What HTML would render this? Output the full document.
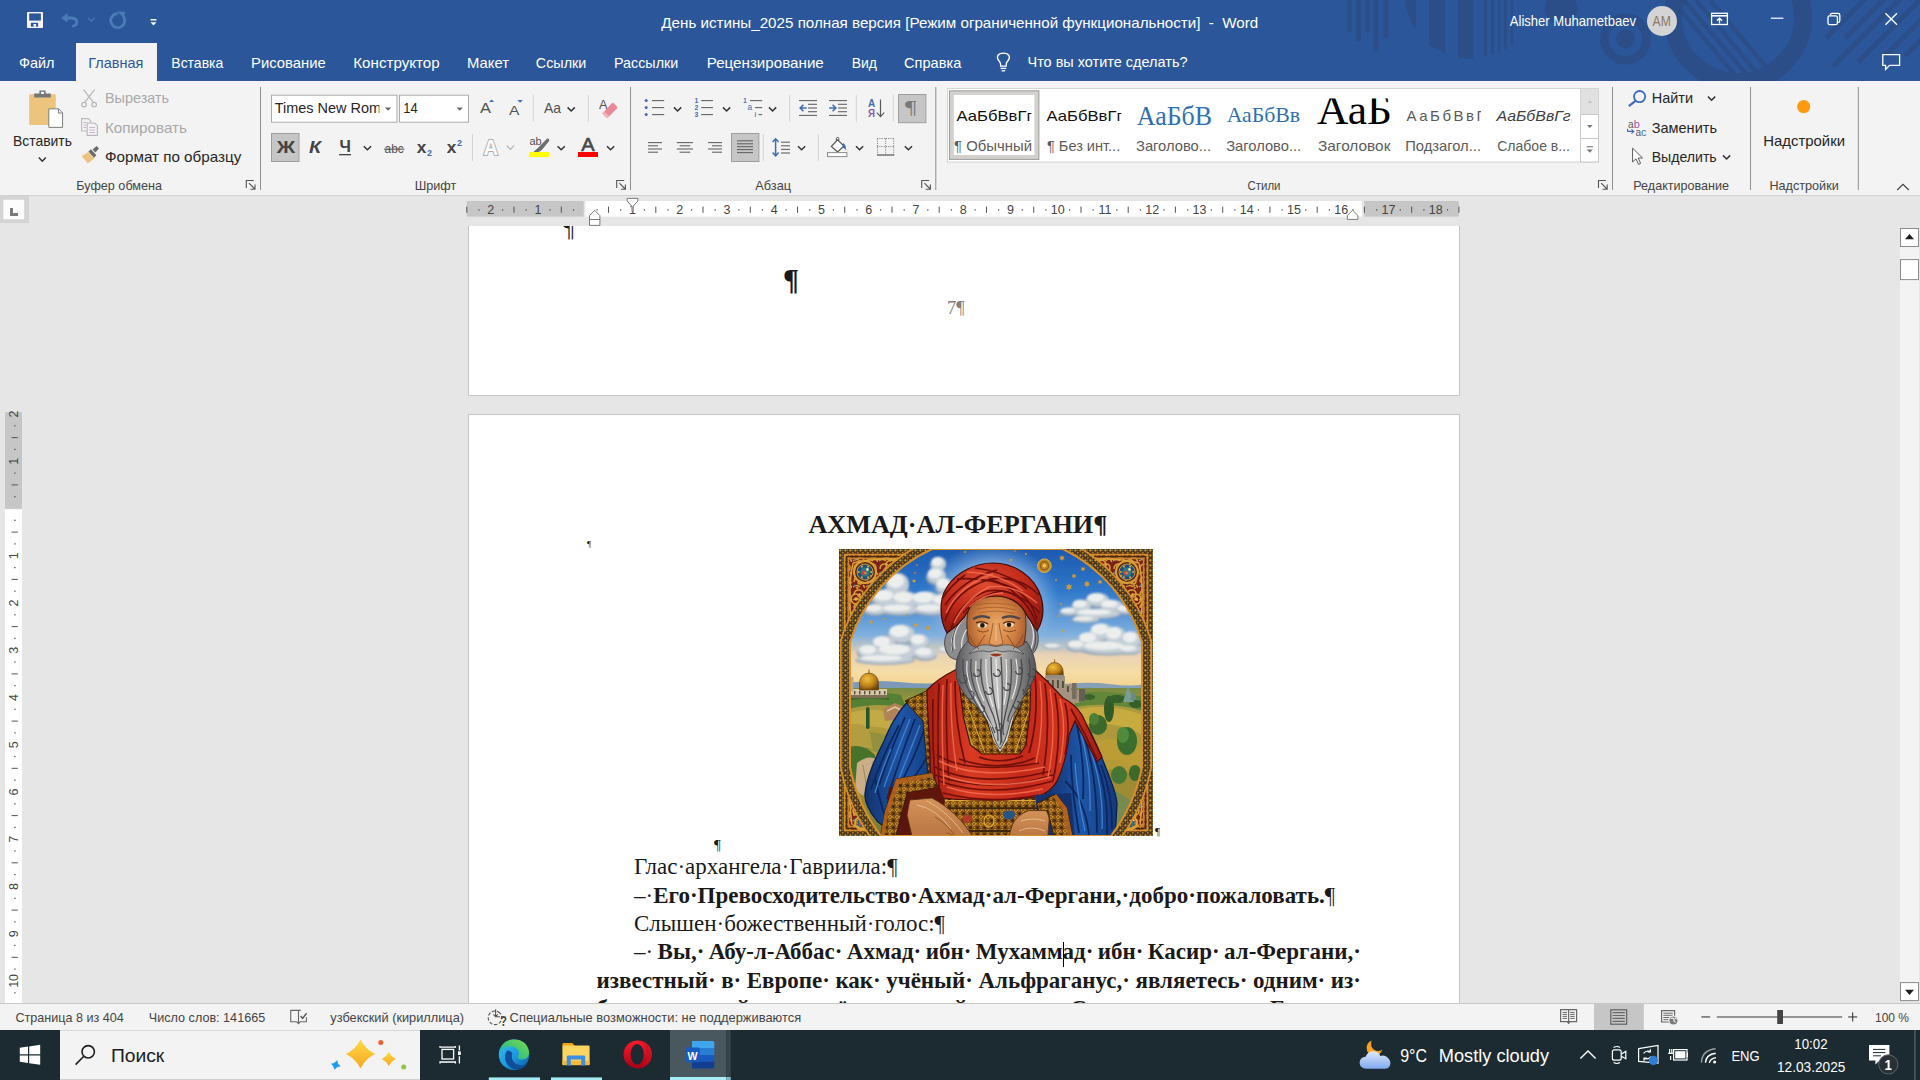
<!DOCTYPE html>
<html lang="ru">
<head>
<meta charset="utf-8">
<title>День истины_2025 полная версия - Word</title>
<style>
html,body{margin:0;padding:0;background:#e6e6e6;}
body{width:1920px;height:1080px;overflow:hidden;position:relative;font-family:"Liberation Sans",sans-serif;}
.abs{position:absolute;}
svg{position:absolute;left:0;overflow:hidden;}
svg text{font-family:"Liberation Sans",sans-serif;}
#titlebar{left:0;top:0;width:1920px;height:81px;background:#2b579a;}
#ribbon{left:0;top:81px;width:1920px;height:114px;background:#f3f3f3;border-bottom:1px solid #d2d2d2;}
#docarea{left:0;top:196px;width:1920px;height:807px;background:#e6e6e6;overflow:hidden;}
#statusbar{left:0;top:1003px;width:1920px;height:27px;background:#f3f3f3;border-top:1px solid #c8c8c8;box-sizing:border-box;}
#taskbar{left:0;top:1030px;width:1920px;height:50px;background:#1b2b31;}
.page{position:absolute;background:#fff;box-sizing:border-box;border:1px solid #c6c6c6;overflow:hidden;}
.doc{font-family:"Liberation Serif","Noto Serif CJK SC",serif;color:#1a1a1a;white-space:nowrap;}
.ln{position:absolute;font-size:23px;line-height:28px;height:28px;white-space:nowrap;}
.jl{display:flex;justify-content:space-between;}
b{font-weight:bold;}
</style>
</head>
<body>

<div id="titlebar" class="abs">
<svg width="1920" height="81" viewBox="0 0 1920 81" style="top:0">
<!-- decorative pattern -->
<g fill="#2b4e89">
<rect x="1347" y="0" width="4.7" height="31.7"/>
<rect x="1356" y="0" width="4.8" height="41"/>
<rect x="1365" y="0" width="4.7" height="31.7"/>
<rect x="1373.3" y="0" width="5" height="51.7"/>
<rect x="1383.3" y="0" width="5" height="37.5"/>
<path d="M1405 0 L1416 0 L1416 30 Q1407 18 1405 0Z"/>
<path d="M1429 0 H1445 V53.5 L1429 45Z"/>
<path d="M1458 0 H1473.3 V59 L1458 58Z"/>
<rect x="1484" y="0" width="3" height="56.7"/>
<rect x="1490.8" y="0" width="3" height="55"/>
<rect x="1498" y="0" width="2.2" height="52.5"/>
<rect x="1504" y="0" width="3" height="49"/>
<rect x="1510.8" y="0" width="2.4" height="45"/>
<circle cx="1561" cy="8.7" r="16.5"/>
</g>
<circle cx="1625.5" cy="39" r="21.2" fill="none" stroke="#2b4e89" stroke-width="8.6"/>
<circle cx="1625.5" cy="39" r="9.5" fill="#2b4e89"/>
<circle cx="1738" cy="17" r="65" fill="none" stroke="#2b4e89" stroke-width="18"/>
<clipPath id="cpBig"><circle cx="1738" cy="17" r="57"/></clipPath>
<g clip-path="url(#cpBig)" stroke="#2b4e89" stroke-width="4.5" fill="none">
<line x1="1672" y1="0" x2="1740" y2="81"/>
<line x1="1684" y1="0" x2="1752" y2="81"/>
<line x1="1696" y1="0" x2="1764" y2="81"/>
<line x1="1710" y1="0" x2="1778" y2="81"/>
</g>
<g stroke="#2b4e89" stroke-width="5" fill="none">
<line x1="1826" y1="38" x2="1866" y2="-2"/>
<line x1="1845" y1="38" x2="1885" y2="-2"/>
<line x1="1833" y1="66" x2="1901" y2="-2"/>
<line x1="1858" y1="62" x2="1922" y2="-2"/>
<line x1="1885" y1="56" x2="1922" y2="19"/>
<line x1="1905" y1="56" x2="1922" y2="39"/>
</g>
<!-- active tab -->
<rect x="76" y="43" width="81" height="38" fill="#f3f3f3"/>
<!-- save icon -->
<g>
<rect x="27" y="12" width="16" height="16" rx="0.8" fill="#f6f4f2"/>
<rect x="29.2" y="13.4" width="11.7" height="7.2" fill="#2b579a"/>
<rect x="30.9" y="22.8" width="7.2" height="3.9" fill="#2b579a"/>
<rect x="33.5" y="24" width="2.6" height="2.7" fill="#f6f4f2"/>
</g>
<!-- undo (disabled) -->
<g fill="#4a7cb8">
<path d="M61.4 17.9 L67.6 13 V16.5 H71.6 Q78.2 16.8 78.2 22.2 Q78 27 72.2 27.6 V25.2 Q75.4 24.6 75.4 22 Q75.2 19.4 71.6 19.4 H67.6 V22.6Z"/>
</g>
<path d="M87.8 17.6 L91.3 21.2 L94.8 17.6" stroke="#4a7cb8" stroke-width="1.2" fill="none"/>
<path d="M117.6 13.6 A7 7 0 1 0 123.2 16.2" stroke="#4a7cb8" stroke-width="2.7" fill="none"/>
<path d="M116.6 11.6 L124.8 11.8 L123.8 19.4 L121.6 15.4Z" fill="#4a7cb8"/>
<!-- customize QAT -->
<rect x="150.6" y="19" width="5.8" height="1.5" fill="#fff"/>
<path d="M150.5 22.2 H156.5 L153.5 25.6Z" fill="#fff"/>
<!-- title text -->
<g fill="#fff" font-size="15px">
<text x="661.3" y="27.5" textLength="597" lengthAdjust="spacingAndGlyphs" xml:space="preserve">День истины_2025 полная версия [Режим ограниченной функциональности]  -  Word</text>
<text x="1509.8" y="25.8" textLength="126.2" lengthAdjust="spacingAndGlyphs">Alisher Muhametbaev</text>
</g>
<circle cx="1662" cy="21" r="15" fill="#d4d4d4"/>
<text x="1652.6" y="26" font-size="14.5px" fill="#8d7566" textLength="18.2" lengthAdjust="spacingAndGlyphs">AM</text>
<!-- ribbon display options -->
<g stroke="#fff" fill="none" stroke-width="1.3">
<rect x="1711.6" y="13.3" width="15.8" height="11.2"/>
<line x1="1711" y1="15.8" x2="1728" y2="15.8" stroke-width="1.6"/>
<path d="M1719.5 23.5 V18.4 M1716.9 20.8 L1719.5 18.2 L1722.1 20.8"/>
</g>
<!-- minimize -->
<rect x="1770.8" y="17.6" width="12.6" height="1.2" fill="#fff"/>
<!-- restore -->
<g stroke="#fff" fill="none" stroke-width="1.3">
<rect x="1828" y="15.8" width="9.4" height="8.8" rx="1.6"/>
<path d="M1830.4 15.6 V15 Q1830.4 13.4 1832 13.4 H1838 Q1839.8 13.4 1839.8 15.2 V20.8 Q1839.8 22.4 1838.2 22.4 H1837.6"/>
</g>
<!-- close -->
<path d="M1885.4 13.2 L1897 24.8 M1897 13.2 L1885.4 24.8" stroke="#fff" stroke-width="1.3" fill="none"/>
<!-- comments -->
<path d="M1882.8 54.6 H1899.6 V65.4 H1889.6 L1885.6 69.4 V65.4 H1882.8Z" stroke="#fff" stroke-width="1.3" fill="none"/>
<!-- tabs -->
<g fill="#fff" font-size="15px">
<text x="19" y="67.5" textLength="35.5" lengthAdjust="spacingAndGlyphs">Файл</text>
<text x="88.3" y="67.5" textLength="55" lengthAdjust="spacingAndGlyphs" fill="#2b579a">Главная</text>
<text x="171.3" y="67.5" textLength="52" lengthAdjust="spacingAndGlyphs">Вставка</text>
<text x="251" y="67.5" textLength="74.8" lengthAdjust="spacingAndGlyphs">Рисование</text>
<text x="353.3" y="67.5" textLength="86.4" lengthAdjust="spacingAndGlyphs">Конструктор</text>
<text x="467" y="67.5" textLength="42" lengthAdjust="spacingAndGlyphs">Макет</text>
<text x="535.8" y="67.5" textLength="50.5" lengthAdjust="spacingAndGlyphs">Ссылки</text>
<text x="614" y="67.5" textLength="64.3" lengthAdjust="spacingAndGlyphs">Рассылки</text>
<text x="706.7" y="67.5" textLength="117.1" lengthAdjust="spacingAndGlyphs">Рецензирование</text>
<text x="851.7" y="67.5" textLength="25.3" lengthAdjust="spacingAndGlyphs">Вид</text>
<text x="904" y="67.5" textLength="57.3" lengthAdjust="spacingAndGlyphs">Справка</text>
<text x="1027.5" y="66.8" textLength="160" lengthAdjust="spacingAndGlyphs">Что вы хотите сделать?</text>
</g>
<!-- light bulb -->
<g stroke="#fff" fill="none" stroke-width="1.3">
<path d="M1000.6 66.2 V64.4 Q1000.6 62.6 999 61 Q996.6 58.6 997.8 55.6 Q999.2 53.2 1003.4 53.2 Q1007.6 53.2 1009 55.6 Q1010.2 58.6 1007.8 61 Q1006.2 62.6 1006.2 64.4 V66.2 Z"/>
<line x1="1000.6" y1="68.4" x2="1006.2" y2="68.4"/>
<line x1="1001.6" y1="70.8" x2="1005.2" y2="70.8"/>
</g>
</svg>
</div>

<div id="ribbon" class="abs"></div>
<svg width="1920" height="115" viewBox="0 81 1920 115" style="top:81px">
<rect x="260.0" y="87" width="1" height="103" fill="#8f8f8f"/>
<rect x="630.0" y="87" width="1" height="103" fill="#8f8f8f"/>
<rect x="935.3" y="87" width="1" height="103" fill="#8f8f8f"/>
<rect x="1612.0" y="87" width="1" height="103" fill="#8f8f8f"/>
<rect x="1750.0" y="87" width="1" height="103" fill="#8f8f8f"/>
<rect x="1857.8" y="87" width="1" height="103" fill="#8f8f8f"/>
<rect x="29.2" y="94.2" width="26.6" height="30.8" rx="1" fill="#ecc47e"/>
<path d="M34.2 97.6 V93.6 H39.4 V90.4 H45.6 V93.6 H50.8 V97.6Z" fill="#767676"/>
<rect x="41" y="91.8" width="3" height="2.2" fill="#f3f3f3"/>
<path d="M48.8 108.8 H58.6 L62.6 112.8 V127.4 H48.8Z" fill="#fff" stroke="#7d7d7d" stroke-width="1"/>
<path d="M58.4 108.8 V113 H62.6" fill="none" stroke="#7d7d7d" stroke-width="1"/>
<text x="13" y="146" font-size="15px" fill="#262626" textLength="59" lengthAdjust="spacingAndGlyphs">Вставить</text>
<path d="M38.8 157.6 L42.3 161.2 L45.8 157.6" stroke="#333" stroke-width="1.5" fill="none"/>
<g stroke="#b9b9b9" stroke-width="1.3" fill="none"><path d="M83.6 89.6 L93.4 102.4 M94.6 89.6 L84.8 102.4"/><circle cx="84" cy="104.6" r="2.3"/><circle cx="94.2" cy="104.6" r="2.3"/></g>
<text x="105" y="103" font-size="15px" fill="#a9a9a9" textLength="64" lengthAdjust="spacingAndGlyphs">Вырезать</text>
<g stroke="#b9b9b9" stroke-width="1.1" fill="#f3f3f3"><path d="M81.6 118.6 H88.2 L90.8 121.2 V131 H81.6Z"/><path d="M87.2 123 H94.6 L97.4 125.8 V135.4 H87.2Z"/></g>
<g stroke="#c9b7cf" stroke-width="1"><path d="M83.4 122.5h3 M83.4 125h3 M83.4 127.5h3 M89.2 127.5h6 M89.2 130h6 M89.2 132.5h6"/></g>
<text x="105" y="132.5" font-size="15px" fill="#a9a9a9" textLength="82" lengthAdjust="spacingAndGlyphs">Копировать</text>
<path d="M81.6 156.2 L88.2 152 L94.4 158.6 L87.6 163.4 Q86 160.6 81.6 156.2Z" fill="#edc382"/>
<path d="M88.4 151.6 L91 149.2 L96.4 155.2 L94 157.8Z" fill="#6a6a6a"/>
<path d="M92.6 149.4 L96.6 146 L99 148.6 L95.4 152.4Z" fill="#6a6a6a"/>
<text x="105" y="161.7" font-size="15px" fill="#262626" textLength="136.3" lengthAdjust="spacingAndGlyphs">Формат по образцу</text>
<text x="76.3" y="190" font-size="13px" fill="#444" textLength="85.7" lengthAdjust="spacingAndGlyphs">Буфер обмена</text>
<g stroke="#555" stroke-width="1.1" fill="none"><path d="M246.3 188 V180.5 H253.8"/><path d="M249.0 183.2 L254.8 189 M255.0 184.6 V189.2 H250.4"/></g>
<rect x="271.5" y="95.2" width="125.5" height="27" fill="#fff" stroke="#ababab" stroke-width="1"/>
<clipPath id="cpFn"><rect x="272" y="96" width="107.4" height="26"/></clipPath>
<g clip-path="url(#cpFn)"><text x="274.7" y="113.3" font-size="15px" fill="#262626" textLength="122.5" lengthAdjust="spacingAndGlyphs">Times New Roman</text></g>
<path d="M385 107.6 H391.2 L388.1 110.8Z" fill="#666"/>
<rect x="399.5" y="95.2" width="69" height="27" fill="#fff" stroke="#ababab" stroke-width="1"/>
<text x="403.2" y="113.3" font-size="15px" fill="#262626" textLength="14.4" lengthAdjust="spacingAndGlyphs">14</text>
<path d="M456.6 107.6 H462.8 L459.7 110.8Z" fill="#666"/>
<text x="480" y="113.4" font-size="14.5px" fill="#505050" textLength="11" lengthAdjust="spacingAndGlyphs">A</text>
<path d="M489 102 L491.6 99.4 L494.2 102Z" fill="#3e6db5"/>
<text x="509" y="114.6" font-size="13px" fill="#505050" textLength="10.4" lengthAdjust="spacingAndGlyphs">A</text>
<path d="M517.4 100 H522.8 L520.1 102.8Z" fill="#3e6db5"/>
<rect x="532.8" y="95" width="1" height="27" fill="#d4d4d4"/>
<text x="544" y="112.8" font-size="14.5px" fill="#505050" textLength="17" lengthAdjust="spacingAndGlyphs">Aa</text>
<path d="M567.6 107.4 L571.2 111 L574.8 107.4" stroke="#333" stroke-width="1.5" fill="none"/>
<rect x="587.8" y="95" width="1" height="27" fill="#d4d4d4"/>
<text x="599" y="109" font-size="12.5px" fill="#505050" textLength="8.5" lengthAdjust="spacingAndGlyphs">A</text>
<path d="M602.4 113.6 L611.8 103.2 Q612.8 102.4 613.8 103.2 L617 106.4 Q617.8 107.4 617 108.4 L608 117.6 Q607 118.2 606.2 117.4Z" fill="#e8899a"/>
<path d="M602.4 113.6 L606.2 117.4 Q607 118.2 608 117.6 L609.4 116.2 L604 111.8Z" fill="#f3b4bf"/>
<rect x="271.5" y="133.5" width="27.5" height="28" fill="#c6c6c6" stroke="#9e9e9e" stroke-width="1"/>
<text x="276.7" y="153" font-size="16px" fill="#444" textLength="18.3" lengthAdjust="spacingAndGlyphs" font-weight="bold">Ж</text>
<text x="309" y="153" font-size="16px" fill="#444" textLength="12" lengthAdjust="spacingAndGlyphs" font-weight="bold" font-style="italic">К</text>
<text x="339.4" y="152" font-size="16px" fill="#444" textLength="11.4" lengthAdjust="spacingAndGlyphs" font-weight="bold">Ч</text>
<rect x="339" y="154" width="12" height="1.3" fill="#444"/>
<path d="M363.8 146.2 L367.4 149.8 L371 146.2" stroke="#333" stroke-width="1.5" fill="none"/>
<text x="384.6" y="153" font-size="13px" fill="#555" textLength="19" lengthAdjust="spacingAndGlyphs">abc</text>
<rect x="384" y="148.6" width="20.4" height="1.1" fill="#555"/>
<text x="416.7" y="153" font-size="17px" fill="#444" textLength="9.6" lengthAdjust="spacingAndGlyphs" font-weight="bold">x</text>
<text x="427" y="156.4" font-size="9.5px" fill="#3e6db5" textLength="5" lengthAdjust="spacingAndGlyphs" font-weight="bold">2</text>
<text x="446.7" y="153" font-size="17px" fill="#444" textLength="9.6" lengthAdjust="spacingAndGlyphs" font-weight="bold">x</text>
<text x="457" y="145.6" font-size="9.5px" fill="#3e6db5" textLength="5" lengthAdjust="spacingAndGlyphs" font-weight="bold">2</text>
<rect x="472.0" y="134" width="1" height="27" fill="#d4d4d4"/>
<text x="483.6" y="154.6" font-size="22px" font-weight="bold" textLength="14.6" lengthAdjust="spacingAndGlyphs" fill="#fdfdfd" stroke="#aeaeae" stroke-width="2" paint-order="stroke">A</text>
<path d="M506.8 145.6 L510.4 149.4 L514 145.6" stroke="#b4b4b4" stroke-width="1.2" fill="none"/>
<text x="529.4" y="145.2" font-size="11.5px" fill="#505050" textLength="12.2" lengthAdjust="spacingAndGlyphs">ab</text>
<path d="M546.4 139.2 Q547.8 138 549 139.2 Q549.8 140.4 548.8 141.6 L541.6 150.2 L538.6 152 H533.4 L538.4 147.6Z" fill="#6e6e6e"/>
<rect x="529" y="152" width="20" height="5" fill="#ffff00"/>
<path d="M557.6 146.2 L561.2 149.8 L564.8 146.2" stroke="#333" stroke-width="1.5" fill="none"/>
<text x="581.2" y="150.8" font-size="17.8px" fill="#484848" textLength="13.4" lengthAdjust="spacingAndGlyphs" stroke="#484848" stroke-width="0.6">A</text>
<rect x="578" y="152" width="20" height="5" fill="#ff0000"/>
<path d="M607 146.2 L610.6 149.8 L614.2 146.2" stroke="#333" stroke-width="1.5" fill="none"/>
<text x="414.7" y="190" font-size="13px" fill="#444" textLength="41.6" lengthAdjust="spacingAndGlyphs">Шрифт</text>
<g stroke="#555" stroke-width="1.1" fill="none"><path d="M616.7 188 V180.5 H624.2"/><path d="M619.4000000000001 183.2 L625.2 189 M625.4000000000001 184.6 V189.2 H620.8000000000001"/></g>
<circle cx="646.2" cy="100.6" r="1.5" fill="#3e6db5"/>
<rect x="652" y="100.05" width="12.200000000000045" height="1.1" fill="#646464"/>
<circle cx="646.2" cy="107.6" r="1.5" fill="#3e6db5"/>
<rect x="652" y="107.05" width="12.200000000000045" height="1.1" fill="#646464"/>
<circle cx="646.2" cy="114.6" r="1.5" fill="#3e6db5"/>
<rect x="652" y="114.05" width="12.200000000000045" height="1.1" fill="#646464"/>
<path d="M674 107.4 L677.6 111 L681.2 107.4" stroke="#333" stroke-width="1.5" fill="none"/>
<text x="694.4" y="103.0" font-size="7px" fill="#3e6db5" textLength="3.8" lengthAdjust="spacingAndGlyphs" font-weight="bold">1</text>
<rect x="701.2" y="100.05" width="11.799999999999955" height="1.1" fill="#646464"/>
<text x="694.4" y="110.0" font-size="7px" fill="#3e6db5" textLength="3.8" lengthAdjust="spacingAndGlyphs" font-weight="bold">2</text>
<rect x="701.2" y="107.05" width="11.799999999999955" height="1.1" fill="#646464"/>
<text x="694.4" y="117.0" font-size="7px" fill="#3e6db5" textLength="3.8" lengthAdjust="spacingAndGlyphs" font-weight="bold">3</text>
<rect x="701.2" y="114.05" width="11.799999999999955" height="1.1" fill="#646464"/>
<path d="M723 107.4 L726.6 111 L730.2 107.4" stroke="#333" stroke-width="1.5" fill="none"/>
<text x="743.2" y="103" font-size="7px" fill="#3e6db5" textLength="3.4" lengthAdjust="spacingAndGlyphs" font-weight="bold">1</text>
<rect x="750" y="100.05" width="12.200000000000045" height="1.1" fill="#646464"/>
<text x="747.6" y="110.4" font-size="8.5px" fill="#3e6db5" textLength="4.6" lengthAdjust="spacingAndGlyphs">a</text>
<rect x="755" y="107.05" width="7.2000000000000455" height="1.1" fill="#646464"/>
<text x="754.6" y="117.2" font-size="7.5px" fill="#3e6db5" textLength="1.6" lengthAdjust="spacingAndGlyphs" font-weight="bold">i</text>
<rect x="758.6" y="114.05" width="3.6000000000000227" height="1.1" fill="#646464"/>
<path d="M769 107.4 L772.6 111 L776.2 107.4" stroke="#333" stroke-width="1.5" fill="none"/>
<rect x="789.2" y="95" width="1" height="27" fill="#d4d4d4"/>
<rect x="799" y="100.05" width="18" height="1.1" fill="#646464"/>
<rect x="799" y="114.85000000000001" width="18" height="1.1" fill="#646464"/>
<rect x="808" y="103.75" width="9" height="1.1" fill="#646464"/>
<rect x="808" y="107.45" width="9" height="1.1" fill="#646464"/>
<rect x="808" y="111.15" width="9" height="1.1" fill="#646464"/>
<rect x="829" y="100.05" width="18" height="1.1" fill="#646464"/>
<rect x="829" y="114.85000000000001" width="18" height="1.1" fill="#646464"/>
<rect x="838" y="103.75" width="9" height="1.1" fill="#646464"/>
<rect x="838" y="107.45" width="9" height="1.1" fill="#646464"/>
<rect x="838" y="111.15" width="9" height="1.1" fill="#646464"/>
<path d="M806.6 108 H800.4 M803.4 104.8 L800.2 108 L803.4 111.2" stroke="#3e6db5" stroke-width="1.6" fill="none"/>
<path d="M829.2 108 H835.6 M832.6 104.8 L835.8 108 L832.6 111.2" stroke="#3e6db5" stroke-width="1.6" fill="none"/>
<rect x="855.8" y="95" width="1" height="27" fill="#d4d4d4"/>
<text x="868" y="107.2" font-size="11px" fill="#3e6db5" textLength="7.2" lengthAdjust="spacingAndGlyphs" font-weight="bold">А</text>
<text x="868" y="117.2" font-size="11px" fill="#8e5aa8" textLength="7" lengthAdjust="spacingAndGlyphs" font-weight="bold">Я</text>
<path d="M880.5 99.6 V116.4 M876.8 112.6 L880.5 116.6 L884.2 112.6" stroke="#5a5a5a" stroke-width="1.2" fill="none"/>
<rect x="892.8" y="95" width="1" height="27" fill="#d4d4d4"/>
<rect x="898.5" y="94.5" width="27.4" height="28.2" fill="#c6c6c6" stroke="#9e9e9e" stroke-width="1"/>
<text x="905" y="114.4" font-size="19px" fill="#787878" textLength="11.6" lengthAdjust="spacingAndGlyphs" style="font-family:'Liberation Serif',serif">¶</text>
<rect x="648" y="142.04999999999998" width="14" height="1.1" fill="#646464"/>
<rect x="676.8" y="142.04999999999998" width="16.200000000000045" height="1.1" fill="#646464"/>
<rect x="708" y="142.04999999999998" width="14" height="1.1" fill="#646464"/>
<rect x="648" y="145.25" width="10" height="1.1" fill="#646464"/>
<rect x="679.6" y="145.25" width="10.600000000000023" height="1.1" fill="#646464"/>
<rect x="712" y="145.25" width="10" height="1.1" fill="#646464"/>
<rect x="648" y="148.45" width="14" height="1.1" fill="#646464"/>
<rect x="676.8" y="148.45" width="16.200000000000045" height="1.1" fill="#646464"/>
<rect x="708" y="148.45" width="14" height="1.1" fill="#646464"/>
<rect x="648" y="151.64999999999998" width="10" height="1.1" fill="#646464"/>
<rect x="679.6" y="151.64999999999998" width="10.600000000000023" height="1.1" fill="#646464"/>
<rect x="712" y="151.64999999999998" width="10" height="1.1" fill="#646464"/>
<rect x="731.5" y="133.5" width="27.4" height="28" fill="#c6c6c6" stroke="#9e9e9e" stroke-width="1"/>
<rect x="737" y="140.25" width="16" height="1.1" fill="#646464"/>
<rect x="737" y="143.25" width="16" height="1.1" fill="#646464"/>
<rect x="737" y="146.14999999999998" width="16" height="1.1" fill="#646464"/>
<rect x="737" y="149.04999999999998" width="16" height="1.1" fill="#646464"/>
<rect x="737" y="152.04999999999998" width="16" height="1.1" fill="#646464"/>
<rect x="762.8" y="134" width="1" height="27" fill="#d4d4d4"/>
<path d="M775.6 139 V155.6 M772.6 142 L775.6 138.8 L778.6 142 M772.6 152.6 L775.6 155.8 L778.6 152.6" stroke="#3e6db5" stroke-width="1.5" fill="none"/>
<rect x="781" y="141.64999999999998" width="9" height="1.1" fill="#646464"/>
<rect x="781" y="145.25" width="9" height="1.1" fill="#646464"/>
<rect x="781" y="148.85" width="9" height="1.1" fill="#646464"/>
<rect x="781" y="152.45" width="9" height="1.1" fill="#646464"/>
<path d="M798 146.2 L801.6 149.8 L805.2 146.2" stroke="#333" stroke-width="1.5" fill="none"/>
<rect x="817.8" y="134" width="1" height="27" fill="#d4d4d4"/>
<path d="M831.4 146.4 L837.6 139.8 L844 146 L837.6 152 Z" fill="#fdfdfd" stroke="#555" stroke-width="1.2"/>
<path d="M836.4 141 V138.4 Q836.4 137.4 837.6 137.4 Q838.8 137.4 838.8 138.4 V140.6" fill="none" stroke="#555" stroke-width="1"/>
<path d="M843 143 Q846.4 144.8 845.8 150 Q844.2 148 842.4 147.6Z" fill="#3e6db5"/>
<rect x="827.5" y="152.6" width="19.4" height="4" fill="#fff" stroke="#8a8a8a" stroke-width="1"/>
<path d="M856 146.2 L859.6 149.8 L863.2 146.2" stroke="#333" stroke-width="1.5" fill="none"/>
<g stroke="#7a7a7a" stroke-width="1" stroke-dasharray="1 1.2" fill="none"><path d="M877.2 138.5 H894 M877.5 138.5 V154.6 M893.7 138.5 V154.6 M885.6 138.5 V154.6 M877.2 146.6 H894"/></g>
<rect x="877" y="154.4" width="17.200000000000045" height="1.2" fill="#555"/>
<path d="M904.8 146.2 L908.4 149.8 L912 146.2" stroke="#333" stroke-width="1.5" fill="none"/>
<text x="755.3" y="190" font-size="13px" fill="#444" textLength="35.7" lengthAdjust="spacingAndGlyphs">Абзац</text>
<g stroke="#555" stroke-width="1.1" fill="none"><path d="M921.7 188 V180.5 H929.2"/><path d="M924.4000000000001 183.2 L930.2 189 M930.4000000000001 184.6 V189.2 H925.8000000000001"/></g>
<rect x="947.5" y="88.5" width="651" height="73.5" fill="#fff" stroke="#d4d4d4" stroke-width="1"/>
<rect x="949.5" y="90.8" width="89.4" height="68.6" fill="#d2d1ce" stroke="#9c9c9c" stroke-width="1"/>
<rect x="953.8" y="95" width="80.6" height="60" fill="#fff"/>
<clipPath id="cpS1"><rect x="954" y="95" width="77.4" height="60"/></clipPath>
<g clip-path="url(#cpS1)"><text x="956.6" y="120.5" font-size="15px" fill="#111" textLength="78.5" lengthAdjust="spacingAndGlyphs">АаБбВвГг,</text></g>
<text x="954" y="150.8" font-size="14.5px" fill="#5c5c5c" textLength="78" lengthAdjust="spacingAndGlyphs">¶ Обычный</text>
<clipPath id="cpS2"><rect x="1044" y="95" width="77.4" height="60"/></clipPath>
<g clip-path="url(#cpS2)"><text x="1046.6" y="120.5" font-size="15px" fill="#111" textLength="78.5" lengthAdjust="spacingAndGlyphs">АаБбВвГг,</text></g>
<text x="1047" y="150.8" font-size="14.5px" fill="#5c5c5c" textLength="73.2" lengthAdjust="spacingAndGlyphs">¶ Без инт...</text>
<text x="1136.8" y="124.6" font-size="26.5px" fill="#2f6fb4" textLength="75.2" lengthAdjust="spacingAndGlyphs" style="font-family:'Liberation Serif',serif">АаБбВ</text>
<text x="1136" y="150.8" font-size="14.5px" fill="#5c5c5c" textLength="75" lengthAdjust="spacingAndGlyphs">Заголово...</text>
<text x="1226.7" y="122.4" font-size="21.5px" fill="#2f6fb4" textLength="73.4" lengthAdjust="spacingAndGlyphs" style="font-family:'Liberation Serif',serif">АаБбВв</text>
<text x="1226.2" y="150.8" font-size="14.5px" fill="#5c5c5c" textLength="75" lengthAdjust="spacingAndGlyphs">Заголово...</text>
<clipPath id="cpS5"><rect x="1314" y="98.6" width="78.2" height="40"/></clipPath>
<g clip-path="url(#cpS5)"><text x="1317" y="123.7" font-size="42px" fill="#000" textLength="75" lengthAdjust="spacingAndGlyphs" style="font-family:'Liberation Serif',serif">АаБ</text></g>
<text x="1318" y="150.8" font-size="14.5px" fill="#5c5c5c" textLength="72.4" lengthAdjust="spacingAndGlyphs">Заголовок</text>
<clipPath id="cpS6"><rect x="1404" y="95" width="77" height="40"/></clipPath>
<g clip-path="url(#cpS6)"><text x="1406.6" y="120.5" font-size="15px" fill="#5a5a5a" textLength="86" lengthAdjust="spacing">АаБбВвГг</text></g>
<text x="1405.2" y="150.8" font-size="14.5px" fill="#5c5c5c" textLength="75.8" lengthAdjust="spacingAndGlyphs">Подзагол...</text>
<clipPath id="cpS7"><rect x="1494" y="95" width="77.4" height="40"/></clipPath>
<g clip-path="url(#cpS7)"><text x="1496.6" y="120.5" font-size="15px" fill="#404040" textLength="78.5" lengthAdjust="spacingAndGlyphs" font-style="italic">АаБбВвГг,</text></g>
<text x="1497.2" y="150.8" font-size="14.5px" fill="#5c5c5c" textLength="72.8" lengthAdjust="spacingAndGlyphs">Слабое в...</text>
<rect x="1580.5" y="88.5" width="18" height="26" fill="#e1e1e1" stroke="#d4d4d4" stroke-width="1"/>
<path d="M1587.4 103 L1589.8 100.4 L1592.2 103Z" fill="#c4c4c4"/>
<rect x="1580.5" y="114.5" width="18" height="24" fill="#fff" stroke="#c8c8c8" stroke-width="1"/>
<path d="M1587 125 H1592.6 L1589.8 128Z" fill="#777"/>
<rect x="1580.5" y="138.5" width="18" height="23.5" fill="#fff" stroke="#c8c8c8" stroke-width="1"/>
<rect x="1586.6" y="146.2" width="6.4" height="1.1" fill="#777"/><path d="M1586.8 149.4 H1592.8 L1589.8 152.8Z" fill="#777"/>
<text x="1247.5" y="190" font-size="13px" fill="#444" textLength="33" lengthAdjust="spacingAndGlyphs">Стили</text>
<g stroke="#555" stroke-width="1.1" fill="none"><path d="M1598.5 188 V180.5 H1606"/><path d="M1601.2 183.2 L1607 189 M1607.2 184.6 V189.2 H1602.6"/></g>
<circle cx="1639.6" cy="96.6" r="5.6" fill="none" stroke="#3e6db5" stroke-width="1.8"/>
<path d="M1635.6 100.8 L1628.8 106.2" stroke="#3e6db5" stroke-width="2.2" fill="none"/>
<text x="1651.7" y="103" font-size="15px" fill="#262626" textLength="41.3" lengthAdjust="spacingAndGlyphs">Найти</text>
<path d="M1708 96.6 L1711.6 100.2 L1715.2 96.6" stroke="#333" stroke-width="1.5" fill="none"/>
<text x="1628" y="128" font-size="10.5px" fill="#5a5a5a" textLength="5.6" lengthAdjust="spacingAndGlyphs">a</text><text x="1633.8" y="128" font-size="10.5px" fill="#8e5aa8" textLength="6" lengthAdjust="spacingAndGlyphs">b</text>
<text x="1635.4" y="136.4" font-size="10.5px" fill="#5a5a5a" textLength="5.6" lengthAdjust="spacingAndGlyphs">a</text><text x="1641" y="136.4" font-size="10.5px" fill="#3e6db5" textLength="5.4" lengthAdjust="spacingAndGlyphs">c</text>
<path d="M1627.6 128.8 V131.4 H1633.6 M1631.4 129.4 L1633.8 131.4 L1631.4 133.6" stroke="#3e6db5" stroke-width="1.1" fill="none"/>
<text x="1651.7" y="132.5" font-size="15px" fill="#262626" textLength="65.3" lengthAdjust="spacingAndGlyphs">Заменить</text>
<path d="M1632.6 148.2 V162 L1636 158.8 L1638.6 164.4 L1640.6 163.4 L1638.2 158 H1642.6Z" fill="#fff" stroke="#5a5a5a" stroke-width="1"/>
<text x="1651.7" y="161.7" font-size="15px" fill="#262626" textLength="65" lengthAdjust="spacingAndGlyphs">Выделить</text>
<path d="M1723 155.4 L1726.6 159 L1730.2 155.4" stroke="#333" stroke-width="1.5" fill="none"/>
<text x="1633.3" y="190" font-size="13px" fill="#444" textLength="95.7" lengthAdjust="spacingAndGlyphs">Редактирование</text>
<circle cx="1803.7" cy="106.7" r="6.6" fill="#ff9a0e"/>
<text x="1763.3" y="146" font-size="15px" fill="#262626" textLength="81.7" lengthAdjust="spacingAndGlyphs">Надстройки</text>
<text x="1769.5" y="190" font-size="13px" fill="#444" textLength="69.2" lengthAdjust="spacingAndGlyphs">Надстройки</text>
<path d="M1897.2 190 L1903 184.4 L1908.8 190" stroke="#444" stroke-width="1.2" fill="none"/>
</svg>
<svg width="1920" height="807" viewBox="0 196 1920 807" style="top:196px">
<rect x="0" y="196" width="29" height="27" fill="#d4d4d4"/>
<rect x="3.4" y="199.8" width="20.8" height="19.4" fill="#fcfcfc"/>
<path d="M10 208 H13 V213 H18 V215.9 H10Z" fill="#7a7a7a"/>
<rect x="466.7" y="201" width="117" height="15.6" fill="#c6c6c6"/>
<rect x="585.6" y="201" width="776.4" height="15.6" fill="#fff"/>
<rect x="1364.2" y="201" width="94.6" height="15.6" fill="#c6c6c6"/>
<rect x="466.3" y="206.6" width="1" height="6.2" fill="#555"/>
<rect x="478.4" y="209.2" width="1.2" height="1.4" fill="#555"/>
<text x="490.8" y="213.8" font-size="12.5px" fill="#444" text-anchor="middle">2</text>
<rect x="502.0" y="209.2" width="1.2" height="1.4" fill="#555"/>
<rect x="513.5" y="206.6" width="1" height="6.2" fill="#555"/>
<rect x="525.6" y="209.2" width="1.2" height="1.4" fill="#555"/>
<text x="538.1" y="213.8" font-size="12.5px" fill="#444" text-anchor="middle">1</text>
<rect x="549.3" y="209.2" width="1.2" height="1.4" fill="#555"/>
<rect x="560.8" y="206.6" width="1" height="6.2" fill="#555"/>
<rect x="572.9" y="209.2" width="1.2" height="1.4" fill="#555"/>
<rect x="596.5" y="209.2" width="1.2" height="1.4" fill="#555"/>
<rect x="608.0" y="206.6" width="1" height="6.2" fill="#555"/>
<rect x="620.1" y="209.2" width="1.2" height="1.4" fill="#555"/>
<text x="632.5" y="213.8" font-size="12.5px" fill="#444" text-anchor="middle">1</text>
<rect x="643.8" y="209.2" width="1.2" height="1.4" fill="#555"/>
<rect x="655.3" y="206.6" width="1" height="6.2" fill="#555"/>
<rect x="667.4" y="209.2" width="1.2" height="1.4" fill="#555"/>
<text x="679.8" y="213.8" font-size="12.5px" fill="#444" text-anchor="middle">2</text>
<rect x="691.0" y="209.2" width="1.2" height="1.4" fill="#555"/>
<rect x="702.5" y="206.6" width="1" height="6.2" fill="#555"/>
<rect x="714.6" y="209.2" width="1.2" height="1.4" fill="#555"/>
<text x="727.0" y="213.8" font-size="12.5px" fill="#444" text-anchor="middle">3</text>
<rect x="738.2" y="209.2" width="1.2" height="1.4" fill="#555"/>
<rect x="749.8" y="206.6" width="1" height="6.2" fill="#555"/>
<rect x="761.9" y="209.2" width="1.2" height="1.4" fill="#555"/>
<text x="774.3" y="213.8" font-size="12.5px" fill="#444" text-anchor="middle">4</text>
<rect x="785.5" y="209.2" width="1.2" height="1.4" fill="#555"/>
<rect x="797.0" y="206.6" width="1" height="6.2" fill="#555"/>
<rect x="809.1" y="209.2" width="1.2" height="1.4" fill="#555"/>
<text x="821.5" y="213.8" font-size="12.5px" fill="#444" text-anchor="middle">5</text>
<rect x="832.7" y="209.2" width="1.2" height="1.4" fill="#555"/>
<rect x="844.2" y="206.6" width="1" height="6.2" fill="#555"/>
<rect x="856.4" y="209.2" width="1.2" height="1.4" fill="#555"/>
<text x="868.8" y="213.8" font-size="12.5px" fill="#444" text-anchor="middle">6</text>
<rect x="880.0" y="209.2" width="1.2" height="1.4" fill="#555"/>
<rect x="891.5" y="206.6" width="1" height="6.2" fill="#555"/>
<rect x="903.6" y="209.2" width="1.2" height="1.4" fill="#555"/>
<text x="916.0" y="213.8" font-size="12.5px" fill="#444" text-anchor="middle">7</text>
<rect x="927.2" y="209.2" width="1.2" height="1.4" fill="#555"/>
<rect x="938.7" y="206.6" width="1" height="6.2" fill="#555"/>
<rect x="950.8" y="209.2" width="1.2" height="1.4" fill="#555"/>
<text x="963.3" y="213.8" font-size="12.5px" fill="#444" text-anchor="middle">8</text>
<rect x="974.5" y="209.2" width="1.2" height="1.4" fill="#555"/>
<rect x="986.0" y="206.6" width="1" height="6.2" fill="#555"/>
<rect x="998.1" y="209.2" width="1.2" height="1.4" fill="#555"/>
<text x="1010.5" y="213.8" font-size="12.5px" fill="#444" text-anchor="middle">9</text>
<rect x="1021.7" y="209.2" width="1.2" height="1.4" fill="#555"/>
<rect x="1033.2" y="206.6" width="1" height="6.2" fill="#555"/>
<rect x="1045.3" y="209.2" width="1.2" height="1.4" fill="#555"/>
<text x="1057.7" y="213.8" font-size="12.5px" fill="#444" text-anchor="middle">10</text>
<rect x="1069.0" y="209.2" width="1.2" height="1.4" fill="#555"/>
<rect x="1080.5" y="206.6" width="1" height="6.2" fill="#555"/>
<rect x="1092.6" y="209.2" width="1.2" height="1.4" fill="#555"/>
<text x="1105.0" y="213.8" font-size="12.5px" fill="#444" text-anchor="middle">11</text>
<rect x="1116.2" y="209.2" width="1.2" height="1.4" fill="#555"/>
<rect x="1127.7" y="206.6" width="1" height="6.2" fill="#555"/>
<rect x="1139.8" y="209.2" width="1.2" height="1.4" fill="#555"/>
<text x="1152.2" y="213.8" font-size="12.5px" fill="#444" text-anchor="middle">12</text>
<rect x="1163.4" y="209.2" width="1.2" height="1.4" fill="#555"/>
<rect x="1174.9" y="206.6" width="1" height="6.2" fill="#555"/>
<rect x="1187.1" y="209.2" width="1.2" height="1.4" fill="#555"/>
<text x="1199.5" y="213.8" font-size="12.5px" fill="#444" text-anchor="middle">13</text>
<rect x="1210.7" y="209.2" width="1.2" height="1.4" fill="#555"/>
<rect x="1222.2" y="206.6" width="1" height="6.2" fill="#555"/>
<rect x="1234.3" y="209.2" width="1.2" height="1.4" fill="#555"/>
<text x="1246.7" y="213.8" font-size="12.5px" fill="#444" text-anchor="middle">14</text>
<rect x="1257.9" y="209.2" width="1.2" height="1.4" fill="#555"/>
<rect x="1269.4" y="206.6" width="1" height="6.2" fill="#555"/>
<rect x="1281.5" y="209.2" width="1.2" height="1.4" fill="#555"/>
<text x="1294.0" y="213.8" font-size="12.5px" fill="#444" text-anchor="middle">15</text>
<rect x="1305.2" y="209.2" width="1.2" height="1.4" fill="#555"/>
<rect x="1316.7" y="206.6" width="1" height="6.2" fill="#555"/>
<rect x="1328.8" y="209.2" width="1.2" height="1.4" fill="#555"/>
<text x="1341.2" y="213.8" font-size="12.5px" fill="#444" text-anchor="middle">16</text>
<rect x="1352.4" y="209.2" width="1.2" height="1.4" fill="#555"/>
<rect x="1363.9" y="206.6" width="1" height="6.2" fill="#555"/>
<rect x="1376.0" y="209.2" width="1.2" height="1.4" fill="#555"/>
<text x="1388.4" y="213.8" font-size="12.5px" fill="#444" text-anchor="middle">17</text>
<rect x="1399.7" y="209.2" width="1.2" height="1.4" fill="#555"/>
<rect x="1411.2" y="206.6" width="1" height="6.2" fill="#555"/>
<rect x="1423.3" y="209.2" width="1.2" height="1.4" fill="#555"/>
<text x="1435.7" y="213.8" font-size="12.5px" fill="#444" text-anchor="middle">18</text>
<rect x="1446.9" y="209.2" width="1.2" height="1.4" fill="#555"/>
<rect x="1458.4" y="206.6" width="1" height="6.2" fill="#555"/>
<path d="M627.2 198.4 H637.8 V201 L633 206.4 V211.6 H632 V206.4 L627.2 201Z" fill="#fff" stroke="#7a7a7a" stroke-width="1"/>
<path d="M589.5 215.6 L594.7 210.4 L599.9 215.6 V225.4 H589.5Z" fill="#fff" stroke="#7a7a7a" stroke-width="1"/>
<path d="M589.5 219.5 H599.9" stroke="#7a7a7a" stroke-width="1"/>
<path d="M1347.3 219.4 V215.4 L1352.6 210.2 L1357.9 215.4 V219.4Z" fill="#fff" stroke="#7a7a7a" stroke-width="1"/>
<rect x="5" y="412.2" width="17" height="96.6" fill="#c6c6c6"/>
<rect x="5" y="509.4" width="17" height="493.6" fill="#fff"/>
<text transform="translate(18.2 414.0) rotate(-90)" font-size="12.5px" fill="#444" text-anchor="middle">2</text>
<rect x="14.2" y="425.2" width="1.4" height="1.2" fill="#555"/>
<rect x="11.6" y="437.1" width="6.2" height="1" fill="#555"/>
<rect x="14.2" y="448.8" width="1.4" height="1.2" fill="#555"/>
<text transform="translate(18.2 461.3) rotate(-90)" font-size="12.5px" fill="#444" text-anchor="middle">1</text>
<rect x="14.2" y="472.5" width="1.4" height="1.2" fill="#555"/>
<rect x="11.6" y="484.4" width="6.2" height="1" fill="#555"/>
<rect x="14.2" y="496.1" width="1.4" height="1.2" fill="#555"/>
<rect x="14.2" y="519.7" width="1.4" height="1.2" fill="#555"/>
<rect x="11.6" y="531.6" width="6.2" height="1" fill="#555"/>
<rect x="14.2" y="543.3" width="1.4" height="1.2" fill="#555"/>
<text transform="translate(18.2 555.7) rotate(-90)" font-size="12.5px" fill="#444" text-anchor="middle">1</text>
<rect x="14.2" y="567.0" width="1.4" height="1.2" fill="#555"/>
<rect x="11.6" y="578.9" width="6.2" height="1" fill="#555"/>
<rect x="14.2" y="590.6" width="1.4" height="1.2" fill="#555"/>
<text transform="translate(18.2 603.0) rotate(-90)" font-size="12.5px" fill="#444" text-anchor="middle">2</text>
<rect x="14.2" y="614.2" width="1.4" height="1.2" fill="#555"/>
<rect x="11.6" y="626.1" width="6.2" height="1" fill="#555"/>
<rect x="14.2" y="637.8" width="1.4" height="1.2" fill="#555"/>
<text transform="translate(18.2 650.2) rotate(-90)" font-size="12.5px" fill="#444" text-anchor="middle">3</text>
<rect x="14.2" y="661.4" width="1.4" height="1.2" fill="#555"/>
<rect x="11.6" y="673.4" width="6.2" height="1" fill="#555"/>
<rect x="14.2" y="685.1" width="1.4" height="1.2" fill="#555"/>
<text transform="translate(18.2 697.5) rotate(-90)" font-size="12.5px" fill="#444" text-anchor="middle">4</text>
<rect x="14.2" y="708.7" width="1.4" height="1.2" fill="#555"/>
<rect x="11.6" y="720.6" width="6.2" height="1" fill="#555"/>
<rect x="14.2" y="732.3" width="1.4" height="1.2" fill="#555"/>
<text transform="translate(18.2 744.7) rotate(-90)" font-size="12.5px" fill="#444" text-anchor="middle">5</text>
<rect x="14.2" y="755.9" width="1.4" height="1.2" fill="#555"/>
<rect x="11.6" y="767.8" width="6.2" height="1" fill="#555"/>
<rect x="14.2" y="779.6" width="1.4" height="1.2" fill="#555"/>
<text transform="translate(18.2 792.0) rotate(-90)" font-size="12.5px" fill="#444" text-anchor="middle">6</text>
<rect x="14.2" y="803.2" width="1.4" height="1.2" fill="#555"/>
<rect x="11.6" y="815.1" width="6.2" height="1" fill="#555"/>
<rect x="14.2" y="826.8" width="1.4" height="1.2" fill="#555"/>
<text transform="translate(18.2 839.2) rotate(-90)" font-size="12.5px" fill="#444" text-anchor="middle">7</text>
<rect x="14.2" y="850.4" width="1.4" height="1.2" fill="#555"/>
<rect x="11.6" y="862.3" width="6.2" height="1" fill="#555"/>
<rect x="14.2" y="874.0" width="1.4" height="1.2" fill="#555"/>
<text transform="translate(18.2 886.5) rotate(-90)" font-size="12.5px" fill="#444" text-anchor="middle">8</text>
<rect x="14.2" y="897.7" width="1.4" height="1.2" fill="#555"/>
<rect x="11.6" y="909.6" width="6.2" height="1" fill="#555"/>
<rect x="14.2" y="921.3" width="1.4" height="1.2" fill="#555"/>
<text transform="translate(18.2 933.7) rotate(-90)" font-size="12.5px" fill="#444" text-anchor="middle">9</text>
<rect x="14.2" y="944.9" width="1.4" height="1.2" fill="#555"/>
<rect x="11.6" y="956.8" width="6.2" height="1" fill="#555"/>
<rect x="14.2" y="968.5" width="1.4" height="1.2" fill="#555"/>
<text transform="translate(18.2 980.9) rotate(-90)" font-size="12.5px" fill="#444" text-anchor="middle">10</text>
<rect x="14.2" y="992.2" width="1.4" height="1.2" fill="#555"/>
<rect x="1900" y="246.6" width="19" height="736" fill="#f3f3f3"/>
<rect x="1900.5" y="228.5" width="18" height="18" fill="#fff" stroke="#8c8c8c" stroke-width="1"/>
<path d="M1905 239.2 L1909.5 234 L1914 239.2Z" fill="#1e1e1e"/>
<rect x="1900.5" y="259.6" width="18" height="20" fill="#fff" stroke="#8c8c8c" stroke-width="1"/>
<rect x="1900.5" y="982.6" width="18" height="18" fill="#fff" stroke="#8c8c8c" stroke-width="1"/>
<path d="M1905 989.8 H1914 L1909.5 995Z" fill="#1e1e1e"/>
</svg>
<div id="ribbonline" class="abs" style="left:0;top:195px;width:1920px;height:1px;background:#d2d2d2"></div>
<div id="docwrap" class="abs" style="left:0;top:226px;width:1900px;height:777px;overflow:hidden">
<div class="page doc" style="left:468px;top:-40px;width:992px;height:210px;">
  <div class="ln" style="left:93.5px;top:25.5px;font-size:26.5px;">¶</div>
  <div class="ln" style="left:314px;top:71.5px;font-size:29.5px;line-height:40px;height:40px;font-weight:bold;">¶</div>
  <div class="ln" style="left:478px;top:107px;font-size:18.6px;color:#808080;">7¶</div>
</div>
<div class="page doc" style="left:468px;top:188px;width:992px;height:700px;">
  <div class="ln" style="left:339.4px;top:94px;font-size:26.2px;line-height:32px;height:32px;font-weight:bold;">АХМАД·АЛ-ФЕРГАНИ¶</div>
  <div class="ln" style="left:118px;top:124px;font-size:9px;line-height:10px;height:10px;">¶</div>
  <div class="ln" style="left:686px;top:410px;font-size:11px;line-height:12px;height:12px;">¶</div>
  <div class="ln" style="left:245px;top:421.6px;font-size:15px;line-height:16px;height:16px;">¶</div>
  <div class="ln" style="left:165px;top:438.2px;">Глас·архангела·Гавриила:¶</div>
  <div class="ln" style="left:165px;top:466.6px;">–·<b>Его·Превосходительство·Ахмад·ал-Фергани,·добро·пожаловать.</b>¶</div>
  <div class="ln" style="left:165px;top:495px;">Слышен·божественный·голос:¶</div>
  <div class="ln jl" style="left:165px;top:523.4px;width:727px;"><span>–·</span><b>Вы,·</b><b>Абу-л-Аббас·</b><b>Ахмад·</b><b>ибн·</b><b>Мухаммад·</b><b>ибн·</b><b>Касир·</b><b>ал-Фергани,·</b></div>
  <div class="ln jl" style="left:127.6px;top:551.8px;width:764.4px;font-weight:bold;"><span>известный·</span><span>в·</span><span>Европе·</span><span>как·</span><span>учёный·</span><span>Альфраганус,·</span><span>являетесь·</span><span>одним·</span><span>из·</span></div>
  <div class="ln jl" style="left:127.6px;top:580.2px;width:764.4px;font-weight:bold;"><span>блистательнейших·</span><span>учёных·</span><span>своей·</span><span>эпохи.·</span><span>Среди·</span><span>мудрецов·</span><span>Европы·</span></div>
  <div class="abs" style="left:593.5px;top:527px;width:1px;height:25px;background:#000"></div>
</div>
</div>

<svg id="painting" width="314" height="287" viewBox="0 0 314 287" style="left:839px;top:549px">
<defs>
<linearGradient id="pSky" x1="0" y1="0" x2="0" y2="1">
<stop offset="0" stop-color="#1c57ae"/><stop offset="0.3" stop-color="#2f78ca"/><stop offset="0.6" stop-color="#7fb0df"/><stop offset="0.74" stop-color="#e9d2b4"/><stop offset="0.86" stop-color="#f6dda6"/><stop offset="1" stop-color="#f0cf84"/>
</linearGradient>
<radialGradient id="pHalo" cx="0.5" cy="0.5" r="0.5"><stop offset="0.6" stop-color="#c6ddf2" stop-opacity="0.6"/><stop offset="1" stop-color="#8fbbe4" stop-opacity="0"/></radialGradient>
<linearGradient id="pLand" x1="0" y1="0" x2="0" y2="1"><stop offset="0" stop-color="#768a42"/><stop offset="0.12" stop-color="#ab9a40"/><stop offset="0.55" stop-color="#b89a36"/><stop offset="1" stop-color="#737632"/></linearGradient>
<radialGradient id="pDome" cx="0.4" cy="0.35" r="0.7"><stop offset="0" stop-color="#f0c040"/><stop offset="0.6" stop-color="#c08218"/><stop offset="1" stop-color="#6f440c"/></radialGradient>
<radialGradient id="pTurb" cx="0.42" cy="0.3" r="0.75"><stop offset="0" stop-color="#de4a30"/><stop offset="0.55" stop-color="#c02a1a"/><stop offset="1" stop-color="#8e1a10"/></radialGradient>
<radialGradient id="pFace" cx="0.5" cy="0.42" r="0.62"><stop offset="0" stop-color="#eba766"/><stop offset="0.55" stop-color="#d07f42"/><stop offset="1" stop-color="#8f4a22"/></radialGradient>
<linearGradient id="pBeard" x1="0" y1="0" x2="1" y2="0"><stop offset="0" stop-color="#56575b"/><stop offset="0.28" stop-color="#9a9a9a"/><stop offset="0.5" stop-color="#c4c4c2"/><stop offset="0.74" stop-color="#8e8e8e"/><stop offset="1" stop-color="#535459"/></linearGradient>
<linearGradient id="pRed" x1="0" y1="0" x2="1" y2="0"><stop offset="0" stop-color="#a82014"/><stop offset="0.25" stop-color="#d83a22"/><stop offset="0.55" stop-color="#c42a19"/><stop offset="0.8" stop-color="#d23520"/><stop offset="1" stop-color="#a01c12"/></linearGradient>
<linearGradient id="pBlueL" x1="0" y1="0" x2="1" y2="0"><stop offset="0" stop-color="#10326e"/><stop offset="0.5" stop-color="#1f56a6"/><stop offset="1" stop-color="#12387c"/></linearGradient>
<linearGradient id="pHand" x1="0" y1="0" x2="0" y2="1"><stop offset="0" stop-color="#d4935a"/><stop offset="1" stop-color="#b87340"/></linearGradient>
<pattern id="pGold" width="7" height="7" patternUnits="userSpaceOnUse"><rect width="7" height="7" fill="#7a4c12"/><circle cx="2" cy="2" r="1.5" fill="none" stroke="#d79c2e" stroke-width="0.9"/><circle cx="5.5" cy="5.5" r="1.3" fill="#38220a"/><path d="M4 1 Q6 2 5 3.6 M0.5 5 Q2 4 3 6" stroke="#d4942a" stroke-width="0.8" fill="none"/></pattern>
<pattern id="pBand" width="5" height="5" patternUnits="userSpaceOnUse"><rect width="5" height="5" fill="#46321a"/><circle cx="1.4" cy="1.4" r="1.1" fill="#cf9a38"/><circle cx="3.8" cy="3.8" r="1" fill="#a8761f"/><circle cx="3.6" cy="1.2" r="0.6" fill="#6a8a8a"/><circle cx="1.2" cy="3.8" r="0.5" fill="#8a3a2a"/></pattern>
<pattern id="pScroll" width="13" height="13" patternUnits="userSpaceOnUse"><path d="M2 7 Q2 2 7 2 Q11 2 11 6 Q11 9 8 9 Q6 9 6 7 M1 12 Q5 9 8 12 M11 10 Q13 12 12 13" stroke="#d6a03a" stroke-width="1.5" fill="none"/><circle cx="7.6" cy="6.4" r="1.2" fill="#e8bc54"/><circle cx="2.5" cy="10.5" r="0.9" fill="#3f7a8a"/></pattern>
<clipPath id="pMed"><path d="M93 0 A152 152 0 0 0 11 93 L11 218 Q18 255 42 287 L272 287 Q296 255 303 218 L303 93 A152 152 0 0 0 224 0Z"/></clipPath>
<filter id="pBlur" x="-5%" y="-5%" width="110%" height="110%"><feGaussianBlur stdDeviation="0.4"/></filter>
<filter id="pBlurC" x="-10%" y="-10%" width="120%" height="120%"><feGaussianBlur stdDeviation="0.9"/></filter>
</defs>
<g filter="url(#pBlur)">
<rect width="314" height="287" fill="#7a2014"/>
<rect width="314" height="287" fill="url(#pScroll)"/>
<rect x="2.4" y="2.4" width="309.2" height="282.2" fill="none" stroke="url(#pBand)" stroke-width="4.8"/>
<rect x="5.6" y="5.6" width="302.8" height="275.8" fill="none" stroke="#d5902c" stroke-width="1.6"/>
<rect x="7.6" y="7.6" width="298.8" height="271.8" fill="none" stroke="#4a2a12" stroke-width="1.6"/>
<rect x="9.4" y="9.4" width="295.2" height="268.2" fill="none" stroke="#c9822a" stroke-width="1.6"/>
<circle cx="26" cy="23" r="11" fill="#5a2a12" stroke="#d9a338" stroke-width="2"/><circle cx="26" cy="23" r="8" fill="#1f4f7a" stroke="#c9953a" stroke-width="1"/><circle cx="26" cy="23" r="4.6" fill="#2f7a8a"/><circle cx="25" cy="24" r="2.4" fill="#b8483a"/><circle cx="28.5" cy="20.5" r="1.4" fill="#e8d9a0"/><circle cx="32.2" cy="23.0" r="1.1" fill="#d0a848"/><circle cx="29.1" cy="28.4" r="1.1" fill="#d0a848"/><circle cx="22.9" cy="28.4" r="1.1" fill="#d0a848"/><circle cx="19.8" cy="23.0" r="1.1" fill="#d0a848"/><circle cx="22.9" cy="17.6" r="1.1" fill="#d0a848"/><circle cx="29.1" cy="17.6" r="1.1" fill="#d0a848"/>
<circle cx="288" cy="23" r="11" fill="#5a2a12" stroke="#d9a338" stroke-width="2"/><circle cx="288" cy="23" r="8" fill="#1f4f7a" stroke="#c9953a" stroke-width="1"/><circle cx="288" cy="23" r="4.6" fill="#2f7a8a"/><circle cx="287" cy="24" r="2.4" fill="#b8483a"/><circle cx="290.5" cy="20.5" r="1.4" fill="#e8d9a0"/><circle cx="294.2" cy="23.0" r="1.1" fill="#d0a848"/><circle cx="291.1" cy="28.4" r="1.1" fill="#d0a848"/><circle cx="284.9" cy="28.4" r="1.1" fill="#d0a848"/><circle cx="281.8" cy="23.0" r="1.1" fill="#d0a848"/><circle cx="284.9" cy="17.6" r="1.1" fill="#d0a848"/><circle cx="291.1" cy="17.6" r="1.1" fill="#d0a848"/>
<circle cx="22" cy="274" r="6.050000000000001" fill="#5a2a12" stroke="#d9a338" stroke-width="2"/><circle cx="22" cy="274" r="4.4" fill="#1f4f7a" stroke="#c9953a" stroke-width="1"/><circle cx="22" cy="274" r="2.53" fill="#2f7a8a"/><circle cx="21" cy="275" r="1.32" fill="#b8483a"/><circle cx="24.5" cy="271.5" r="0.77" fill="#e8d9a0"/><circle cx="25.4" cy="274.0" r="0.6050000000000001" fill="#d0a848"/><circle cx="23.7" cy="277.0" r="0.6050000000000001" fill="#d0a848"/><circle cx="20.3" cy="277.0" r="0.6050000000000001" fill="#d0a848"/><circle cx="18.6" cy="274.0" r="0.6050000000000001" fill="#d0a848"/><circle cx="20.3" cy="271.0" r="0.6050000000000001" fill="#d0a848"/><circle cx="23.7" cy="271.0" r="0.6050000000000001" fill="#d0a848"/>
<circle cx="292" cy="274" r="6.050000000000001" fill="#5a2a12" stroke="#d9a338" stroke-width="2"/><circle cx="292" cy="274" r="4.4" fill="#1f4f7a" stroke="#c9953a" stroke-width="1"/><circle cx="292" cy="274" r="2.53" fill="#2f7a8a"/><circle cx="291" cy="275" r="1.32" fill="#b8483a"/><circle cx="294.5" cy="271.5" r="0.77" fill="#e8d9a0"/><circle cx="295.4" cy="274.0" r="0.6050000000000001" fill="#d0a848"/><circle cx="293.7" cy="277.0" r="0.6050000000000001" fill="#d0a848"/><circle cx="290.3" cy="277.0" r="0.6050000000000001" fill="#d0a848"/><circle cx="288.6" cy="274.0" r="0.6050000000000001" fill="#d0a848"/><circle cx="290.3" cy="271.0" r="0.6050000000000001" fill="#d0a848"/><circle cx="293.7" cy="271.0" r="0.6050000000000001" fill="#d0a848"/>
<circle cx="52" cy="16" r="5" fill="none" stroke="#dba53a" stroke-width="1.6"/><circle cx="52" cy="16" r="1.8" fill="#e5b84a"/>
<circle cx="17" cy="50" r="5" fill="none" stroke="#dba53a" stroke-width="1.6"/><circle cx="17" cy="50" r="1.8" fill="#e5b84a"/>
<circle cx="64" cy="10" r="3" fill="none" stroke="#dba53a" stroke-width="1.6"/><circle cx="64" cy="10" r="1.0" fill="#e5b84a"/>
<circle cx="16" cy="66" r="3.4" fill="none" stroke="#dba53a" stroke-width="1.6"/><circle cx="16" cy="66" r="1.2" fill="#e5b84a"/>
<circle cx="45" cy="40" r="3" fill="none" stroke="#dba53a" stroke-width="1.6"/><circle cx="45" cy="40" r="1.0" fill="#e5b84a"/>
<circle cx="262" cy="16" r="5" fill="none" stroke="#dba53a" stroke-width="1.6"/><circle cx="262" cy="16" r="1.8" fill="#e5b84a"/>
<circle cx="297" cy="50" r="5" fill="none" stroke="#dba53a" stroke-width="1.6"/><circle cx="297" cy="50" r="1.8" fill="#e5b84a"/>
<circle cx="250" cy="10" r="3" fill="none" stroke="#dba53a" stroke-width="1.6"/><circle cx="250" cy="10" r="1.0" fill="#e5b84a"/>
<circle cx="298" cy="66" r="3.4" fill="none" stroke="#dba53a" stroke-width="1.6"/><circle cx="298" cy="66" r="1.2" fill="#e5b84a"/>
<circle cx="270" cy="40" r="3" fill="none" stroke="#dba53a" stroke-width="1.6"/><circle cx="270" cy="40" r="1.0" fill="#e5b84a"/>
<circle cx="18" cy="262" r="4" fill="none" stroke="#dba53a" stroke-width="1.6"/><circle cx="18" cy="262" r="1.4" fill="#e5b84a"/>
<circle cx="16" cy="246" r="3" fill="none" stroke="#dba53a" stroke-width="1.6"/><circle cx="16" cy="246" r="1.0" fill="#e5b84a"/>
<circle cx="30" cy="278" r="4" fill="none" stroke="#dba53a" stroke-width="1.6"/><circle cx="30" cy="278" r="1.4" fill="#e5b84a"/>
<circle cx="296" cy="262" r="4" fill="none" stroke="#dba53a" stroke-width="1.6"/><circle cx="296" cy="262" r="1.4" fill="#e5b84a"/>
<circle cx="298" cy="246" r="3" fill="none" stroke="#dba53a" stroke-width="1.6"/><circle cx="298" cy="246" r="1.0" fill="#e5b84a"/>
<circle cx="284" cy="278" r="4" fill="none" stroke="#dba53a" stroke-width="1.6"/><circle cx="284" cy="278" r="1.4" fill="#e5b84a"/>
<path d="M14 14 Q36 8 74 11" stroke="#d9a338" stroke-width="1.5" fill="none"/>
<path d="M14 14 Q9 36 12 74" stroke="#d9a338" stroke-width="1.5" fill="none"/>
<path d="M300 14 Q278 8 240 11" stroke="#d9a338" stroke-width="1.5" fill="none"/>
<path d="M300 14 Q305 36 302 74" stroke="#d9a338" stroke-width="1.5" fill="none"/>
<path d="M40 36 Q52 30 58 20" stroke="#d9a338" stroke-width="1.5" fill="none"/>
<path d="M40 36 Q30 50 20 58" stroke="#d9a338" stroke-width="1.5" fill="none"/>
<path d="M274 36 Q262 30 256 20" stroke="#d9a338" stroke-width="1.5" fill="none"/>
<path d="M274 36 Q284 50 294 58" stroke="#d9a338" stroke-width="1.5" fill="none"/>
<path d="M13 276 Q10 256 12 230" stroke="#d9a338" stroke-width="1.5" fill="none"/>
<path d="M301 276 Q304 256 302 230" stroke="#d9a338" stroke-width="1.5" fill="none"/>
<path d="M14 276 Q26 282 36 284" stroke="#d9a338" stroke-width="1.5" fill="none"/>
<path d="M300 276 Q288 282 278 284" stroke="#d9a338" stroke-width="1.5" fill="none"/>
<circle cx="18.9" cy="36.5" r="0.7" fill="#c9963a"/>
<circle cx="295.1" cy="36.5" r="1.2" fill="#c9963a"/>
<circle cx="24.2" cy="12.3" r="1.0" fill="#c9963a"/>
<circle cx="289.8" cy="12.3" r="0.6" fill="#c9963a"/>
<circle cx="27.0" cy="31.3" r="0.6" fill="#c9963a"/>
<circle cx="287.0" cy="31.3" r="0.9" fill="#c9963a"/>
<circle cx="35.3" cy="16.9" r="1.1" fill="#c9963a"/>
<circle cx="278.7" cy="16.9" r="0.9" fill="#c9963a"/>
<circle cx="11.0" cy="28.6" r="1.2" fill="#c9963a"/>
<circle cx="303.0" cy="28.6" r="0.9" fill="#c9963a"/>
<circle cx="18.3" cy="38.9" r="1.3" fill="#c9963a"/>
<circle cx="295.7" cy="38.9" r="1.1" fill="#c9963a"/>
<circle cx="20.9" cy="31.7" r="0.7" fill="#c9963a"/>
<circle cx="293.1" cy="31.7" r="0.6" fill="#c9963a"/>
<circle cx="28.9" cy="33.7" r="1.3" fill="#c9963a"/>
<circle cx="285.1" cy="33.7" r="1.2" fill="#c9963a"/>
<circle cx="28.9" cy="32.7" r="1.1" fill="#c9963a"/>
<circle cx="285.1" cy="32.7" r="0.8" fill="#c9963a"/>
<circle cx="35.9" cy="17.2" r="0.7" fill="#c9963a"/>
<circle cx="278.1" cy="17.2" r="1.0" fill="#c9963a"/>
<circle cx="26.4" cy="23.9" r="1.2" fill="#c9963a"/>
<circle cx="287.6" cy="23.9" r="1.2" fill="#c9963a"/>
<circle cx="32.0" cy="26.9" r="1.1" fill="#c9963a"/>
<circle cx="282.0" cy="26.9" r="1.3" fill="#c9963a"/>
<circle cx="16.8" cy="30.2" r="1.0" fill="#c9963a"/>
<circle cx="297.2" cy="30.2" r="1.2" fill="#c9963a"/>
<circle cx="12.4" cy="33.6" r="0.9" fill="#c9963a"/>
<circle cx="301.6" cy="33.6" r="0.6" fill="#c9963a"/>
<circle cx="22.8" cy="13.9" r="0.6" fill="#c9963a"/>
<circle cx="291.2" cy="13.9" r="1.2" fill="#c9963a"/>
<path d="M93 0 A152 152 0 0 0 11 93 L11 218 Q18 255 42 287 L272 287 Q296 255 303 218 L303 93 A152 152 0 0 0 224 0Z" fill="none" stroke="#d5902c" stroke-width="20"/>
<path d="M93 0 A152 152 0 0 0 11 93 L11 218 Q18 255 42 287 L272 287 Q296 255 303 218 L303 93 A152 152 0 0 0 224 0Z" fill="none" stroke="url(#pBand)" stroke-width="16.6"/>
<g clip-path="url(#pMed)">
<rect x="0" y="-2" width="314" height="146" fill="url(#pSky)"/>
<ellipse cx="153" cy="52" rx="68" ry="58" fill="url(#pHalo)"/>
<g filter="url(#pBlurC)"><ellipse cx="99" cy="16.4" rx="8" ry="6.8" fill="#97a6b6"/><ellipse cx="97" cy="28.7" rx="10" ry="7.6" fill="#97a6b6"/><ellipse cx="105" cy="38.7" rx="9" ry="7.6" fill="#97a6b6"/><ellipse cx="58" cy="37.9" rx="12" ry="11.0" fill="#97a6b6"/><ellipse cx="46" cy="51.0" rx="14" ry="8.5" fill="#97a6b6"/><ellipse cx="66" cy="53.0" rx="14" ry="8.5" fill="#97a6b6"/><ellipse cx="86" cy="53.0" rx="15" ry="8.5" fill="#97a6b6"/><ellipse cx="104" cy="54.7" rx="12" ry="7.6" fill="#97a6b6"/><ellipse cx="36" cy="61.8" rx="12" ry="5.1" fill="#97a6b6"/><ellipse cx="60" cy="61.8" rx="20" ry="5.1" fill="#97a6b6"/><ellipse cx="92" cy="61.8" rx="18" ry="5.1" fill="#97a6b6"/><ellipse cx="112" cy="63.5" rx="10" ry="4.2" fill="#97a6b6"/><ellipse cx="99.6" cy="14.4" rx="7.4" ry="6.6" fill="#c3ced7"/><ellipse cx="97.6" cy="26.4" rx="9.3" ry="7.4" fill="#c3ced7"/><ellipse cx="105.6" cy="36.5" rx="8.4" ry="7.4" fill="#c3ced7"/><ellipse cx="58.6" cy="34.6" rx="11.2" ry="10.7" fill="#c3ced7"/><ellipse cx="46.6" cy="48.5" rx="13.0" ry="8.2" fill="#c3ced7"/><ellipse cx="66.6" cy="50.5" rx="13.0" ry="8.2" fill="#c3ced7"/><ellipse cx="86.6" cy="50.5" rx="14.0" ry="8.2" fill="#c3ced7"/><ellipse cx="104.6" cy="52.5" rx="11.2" ry="7.4" fill="#c3ced7"/><ellipse cx="36.6" cy="60.3" rx="11.2" ry="4.9" fill="#c3ced7"/><ellipse cx="60.6" cy="60.3" rx="18.6" ry="4.9" fill="#c3ced7"/><ellipse cx="92.6" cy="60.3" rx="16.7" ry="4.9" fill="#c3ced7"/><ellipse cx="112.6" cy="62.2" rx="9.3" ry="4.1" fill="#c3ced7"/><ellipse cx="98.0" cy="12.6" rx="5.6" ry="4.4" fill="#ecefee"/><ellipse cx="95.8" cy="24.4" rx="7.0" ry="5.0" fill="#ecefee"/><ellipse cx="103.9" cy="34.4" rx="6.3" ry="5.0" fill="#ecefee"/><ellipse cx="56.6" cy="31.7" rx="8.4" ry="7.2" fill="#ecefee"/><ellipse cx="44.3" cy="46.2" rx="9.8" ry="5.5" fill="#ecefee"/><ellipse cx="64.3" cy="48.2" rx="9.8" ry="5.5" fill="#ecefee"/><ellipse cx="84.2" cy="48.2" rx="10.5" ry="5.5" fill="#ecefee"/><ellipse cx="102.6" cy="50.4" rx="8.4" ry="5.0" fill="#ecefee"/><ellipse cx="34.6" cy="58.9" rx="8.4" ry="3.3" fill="#ecefee"/><ellipse cx="57.6" cy="58.9" rx="14.0" ry="3.3" fill="#ecefee"/><ellipse cx="89.8" cy="58.9" rx="12.6" ry="3.3" fill="#ecefee"/><ellipse cx="110.8" cy="61.1" rx="7.0" ry="2.8" fill="#ecefee"/></g>
<g filter="url(#pBlurC)"><ellipse cx="62" cy="87.3" rx="14" ry="9.3" fill="#97a6b6"/><ellipse cx="80" cy="94.7" rx="10" ry="7.6" fill="#97a6b6"/><ellipse cx="44" cy="96.7" rx="12" ry="7.6" fill="#97a6b6"/><ellipse cx="30" cy="104.4" rx="12" ry="6.8" fill="#97a6b6"/><ellipse cx="58" cy="104.7" rx="22" ry="7.6" fill="#97a6b6"/><ellipse cx="86" cy="106.1" rx="12" ry="6.0" fill="#97a6b6"/><ellipse cx="46" cy="111.5" rx="30" ry="4.2" fill="#97a6b6"/><ellipse cx="62.6" cy="84.5" rx="13.0" ry="9.0" fill="#c3ced7"/><ellipse cx="80.6" cy="92.5" rx="9.3" ry="7.4" fill="#c3ced7"/><ellipse cx="44.6" cy="94.5" rx="11.2" ry="7.4" fill="#c3ced7"/><ellipse cx="30.6" cy="102.4" rx="11.2" ry="6.6" fill="#c3ced7"/><ellipse cx="58.6" cy="102.5" rx="20.5" ry="7.4" fill="#c3ced7"/><ellipse cx="86.6" cy="104.3" rx="11.2" ry="5.7" fill="#c3ced7"/><ellipse cx="46.6" cy="110.2" rx="27.9" ry="4.1" fill="#c3ced7"/><ellipse cx="60.3" cy="82.0" rx="9.8" ry="6.1" fill="#ecefee"/><ellipse cx="78.8" cy="90.4" rx="7.0" ry="5.0" fill="#ecefee"/><ellipse cx="42.6" cy="92.4" rx="8.4" ry="5.0" fill="#ecefee"/><ellipse cx="28.6" cy="100.6" rx="8.4" ry="4.4" fill="#ecefee"/><ellipse cx="55.4" cy="100.4" rx="15.4" ry="5.0" fill="#ecefee"/><ellipse cx="84.6" cy="102.7" rx="8.4" ry="3.9" fill="#ecefee"/><ellipse cx="42.4" cy="109.1" rx="21.0" ry="2.8" fill="#ecefee"/></g>
<g filter="url(#pBlurC)"><ellipse cx="258" cy="52.4" rx="12" ry="6.8" fill="#97a6b6"/><ellipse cx="242" cy="58.1" rx="10" ry="6.0" fill="#97a6b6"/><ellipse cx="272" cy="58.1" rx="12" ry="6.0" fill="#97a6b6"/><ellipse cx="286" cy="61.5" rx="9" ry="4.2" fill="#97a6b6"/><ellipse cx="230" cy="63.3" rx="10" ry="3.7" fill="#97a6b6"/><ellipse cx="258" cy="65.6" rx="24" ry="4.6" fill="#97a6b6"/><ellipse cx="246" cy="71.1" rx="14" ry="3.1" fill="#97a6b6"/><ellipse cx="258.6" cy="50.4" rx="11.2" ry="6.6" fill="#c3ced7"/><ellipse cx="242.6" cy="56.4" rx="9.3" ry="5.7" fill="#c3ced7"/><ellipse cx="272.6" cy="56.4" rx="11.2" ry="5.7" fill="#c3ced7"/><ellipse cx="286.6" cy="60.2" rx="8.4" ry="4.1" fill="#c3ced7"/><ellipse cx="230.6" cy="62.2" rx="9.3" ry="3.6" fill="#c3ced7"/><ellipse cx="258.6" cy="64.3" rx="22.3" ry="4.4" fill="#c3ced7"/><ellipse cx="246.6" cy="70.2" rx="13.0" ry="3.0" fill="#c3ced7"/><ellipse cx="256.6" cy="48.6" rx="8.4" ry="4.4" fill="#ecefee"/><ellipse cx="240.8" cy="54.7" rx="7.0" ry="3.9" fill="#ecefee"/><ellipse cx="270.6" cy="54.7" rx="8.4" ry="3.9" fill="#ecefee"/><ellipse cx="284.9" cy="59.1" rx="6.3" ry="2.8" fill="#ecefee"/><ellipse cx="228.8" cy="61.2" rx="7.0" ry="2.4" fill="#ecefee"/><ellipse cx="255.1" cy="63.0" rx="16.8" ry="3.0" fill="#ecefee"/><ellipse cx="244.3" cy="69.4" rx="9.8" ry="2.0" fill="#ecefee"/></g>
<g filter="url(#pBlurC)"><ellipse cx="262" cy="85.0" rx="12" ry="8.5" fill="#97a6b6"/><ellipse cx="276" cy="89.3" rx="11" ry="9.3" fill="#97a6b6"/><ellipse cx="250" cy="92.7" rx="12" ry="7.6" fill="#97a6b6"/><ellipse cx="292" cy="93.0" rx="10" ry="8.5" fill="#97a6b6"/><ellipse cx="238" cy="97.8" rx="11" ry="5.1" fill="#97a6b6"/><ellipse cx="268" cy="100.2" rx="28" ry="6.3" fill="#97a6b6"/><ellipse cx="214" cy="97.9" rx="10" ry="2.5" fill="#97a6b6"/><ellipse cx="290" cy="101.5" rx="12" ry="4.2" fill="#97a6b6"/><ellipse cx="262.6" cy="82.5" rx="11.2" ry="8.2" fill="#c3ced7"/><ellipse cx="276.6" cy="86.5" rx="10.2" ry="9.0" fill="#c3ced7"/><ellipse cx="250.6" cy="90.5" rx="11.2" ry="7.4" fill="#c3ced7"/><ellipse cx="292.6" cy="90.5" rx="9.3" ry="8.2" fill="#c3ced7"/><ellipse cx="238.6" cy="96.3" rx="10.2" ry="4.9" fill="#c3ced7"/><ellipse cx="268.6" cy="98.4" rx="26.0" ry="6.1" fill="#c3ced7"/><ellipse cx="214.6" cy="97.2" rx="9.3" ry="2.5" fill="#c3ced7"/><ellipse cx="290.6" cy="100.2" rx="11.2" ry="4.1" fill="#c3ced7"/><ellipse cx="260.6" cy="80.2" rx="8.4" ry="5.5" fill="#ecefee"/><ellipse cx="274.7" cy="84.0" rx="7.7" ry="6.1" fill="#ecefee"/><ellipse cx="248.6" cy="88.4" rx="8.4" ry="5.0" fill="#ecefee"/><ellipse cx="290.8" cy="88.2" rx="7.0" ry="5.5" fill="#ecefee"/><ellipse cx="236.7" cy="94.9" rx="7.7" ry="3.3" fill="#ecefee"/><ellipse cx="264.6" cy="96.7" rx="19.6" ry="4.1" fill="#ecefee"/><ellipse cx="212.8" cy="96.5" rx="7.0" ry="1.7" fill="#ecefee"/><ellipse cx="288.6" cy="99.1" rx="8.4" ry="2.8" fill="#ecefee"/></g>
<g filter="url(#pBlurC)"><ellipse cx="108" cy="100.9" rx="9" ry="2.5" fill="#b8c6d2"/><ellipse cx="122" cy="104.8" rx="7" ry="2.2" fill="#b8c6d2"/><ellipse cx="108.6" cy="100.2" rx="8.4" ry="2.5" fill="#d4dde3"/><ellipse cx="122.6" cy="104.1" rx="6.5" ry="2.1" fill="#d4dde3"/><ellipse cx="106.9" cy="99.5" rx="6.3" ry="1.7" fill="#e6ecef"/><ellipse cx="121.2" cy="103.5" rx="4.9" ry="1.4" fill="#e6ecef"/></g>
<circle cx="205.4" cy="16.7" r="6.8" fill="#c48a24" stroke="#e7b84a" stroke-width="0.9"/><circle cx="205.4" cy="16.7" r="4" fill="none" stroke="#8a5a14" stroke-width="1.2"/><circle cx="205.4" cy="16.7" r="1.6" fill="#f0cc60"/>
<polygon points="187.0,3.4 187.4,4.4 188.4,4.2 187.7,5.0 188.4,5.8 187.4,5.6 187.0,6.6 186.6,5.6 185.6,5.8 186.3,5.0 185.6,4.2 186.6,4.4" fill="#d79a35"/>
<polygon points="176.0,0.6 176.3,1.5 177.2,1.3 176.6,2.0 177.2,2.7 176.3,2.5 176.0,3.4 175.7,2.5 174.8,2.7 175.4,2.0 174.8,1.3 175.7,1.5" fill="#c9803a"/>
<polygon points="172.0,9.0 172.4,10.2 173.7,10.0 172.9,11.0 173.7,12.0 172.4,11.8 172.0,13.0 171.6,11.8 170.3,12.0 171.1,11.0 170.3,10.0 171.6,10.2" fill="#d79a35"/>
<polygon points="223.0,5.8 223.7,7.8 225.8,7.4 224.4,9.0 225.8,10.6 223.7,10.2 223.0,12.2 222.3,10.2 220.2,10.6 221.6,9.0 220.2,7.4 222.3,7.8" fill="#d79a35"/>
<polygon points="244.0,17.2 244.6,18.9 246.4,18.6 245.3,20.0 246.4,21.4 244.6,21.1 244.0,22.8 243.4,21.1 241.6,21.4 242.7,20.0 241.6,18.6 243.4,18.9" fill="#d79a35"/>
<polygon points="235.0,24.2 235.6,25.9 237.4,25.6 236.3,27.0 237.4,28.4 235.6,28.1 235.0,29.8 234.4,28.1 232.6,28.4 233.7,27.0 232.6,25.6 234.4,25.9" fill="#d79a35"/>
<polygon points="248.0,31.4 248.8,33.6 251.1,33.2 249.6,35.0 251.1,36.8 248.8,36.4 248.0,38.6 247.2,36.4 244.9,36.8 246.4,35.0 244.9,33.2 247.2,33.6" fill="#d79a35"/>
<polygon points="261.0,30.2 261.6,31.9 263.4,31.6 262.3,33.0 263.4,34.4 261.6,34.1 261.0,35.8 260.4,34.1 258.6,34.4 259.7,33.0 258.6,31.6 260.4,31.9" fill="#d79a35"/>
<polygon points="230.0,34.2 230.9,36.5 233.3,36.1 231.7,38.0 233.3,39.9 230.9,39.5 230.0,41.8 229.1,39.5 226.7,39.9 228.3,38.0 226.7,36.1 229.1,36.5" fill="#d79a35"/>
<polygon points="217.0,29.4 217.4,30.4 218.4,30.2 217.7,31.0 218.4,31.8 217.4,31.6 217.0,32.6 216.6,31.6 215.6,31.8 216.3,31.0 215.6,30.2 216.6,30.4" fill="#d79a35"/>
<polygon points="222.0,53.4 222.4,54.4 223.4,54.2 222.7,55.0 223.4,55.8 222.4,55.6 222.0,56.6 221.6,55.6 220.6,55.8 221.3,55.0 220.6,54.2 221.6,54.4" fill="#d79a35"/>
<polygon points="220.0,65.4 220.4,66.4 221.4,66.2 220.7,67.0 221.4,67.8 220.4,67.6 220.0,68.6 219.6,67.6 218.6,67.8 219.3,67.0 218.6,66.2 219.6,66.4" fill="#d79a35"/>
<polygon points="224.0,80.2 224.4,81.3 225.6,81.1 224.8,82.0 225.6,82.9 224.4,82.7 224.0,83.8 223.6,82.7 222.4,82.9 223.2,82.0 222.4,81.1 223.6,81.3" fill="#d79a35"/>
<polygon points="126.0,1.4 126.4,2.4 127.4,2.2 126.7,3.0 127.4,3.8 126.4,3.6 126.0,4.6 125.6,3.6 124.6,3.8 125.3,3.0 124.6,2.2 125.6,2.4" fill="#d79a35"/>
<polygon points="78.0,14.5 78.3,15.4 79.3,15.2 78.7,16.0 79.3,16.8 78.3,16.6 78.0,17.5 77.7,16.6 76.7,16.8 77.3,16.0 76.7,15.2 77.7,15.4" fill="#c9803a"/>
<polygon points="76.0,22.5 76.3,23.4 77.3,23.2 76.7,24.0 77.3,24.8 76.3,24.6 76.0,25.5 75.7,24.6 74.7,24.8 75.3,24.0 74.7,23.2 75.7,23.4" fill="#c9803a"/>
<polygon points="75.0,29.8 75.5,31.1 76.9,30.9 76.0,32.0 76.9,33.1 75.5,32.9 75.0,34.2 74.5,32.9 73.1,33.1 74.0,32.0 73.1,30.9 74.5,31.1" fill="#d79a35"/>
<polygon points="45.0,68.4 45.4,69.4 46.4,69.2 45.7,70.0 46.4,70.8 45.4,70.6 45.0,71.6 44.6,70.6 43.6,70.8 44.3,70.0 43.6,69.2 44.6,69.4" fill="#d79a35"/>
<polygon points="32.0,70.6 32.5,72.1 34.1,71.8 33.1,73.0 34.1,74.2 32.5,73.9 32.0,75.4 31.5,73.9 29.9,74.2 30.9,73.0 29.9,71.8 31.5,72.1" fill="#d79a35"/>
<polygon points="77.0,73.2 77.6,74.9 79.4,74.6 78.3,76.0 79.4,77.4 77.6,77.1 77.0,78.8 76.4,77.1 74.6,77.4 75.7,76.0 74.6,74.6 76.4,74.9" fill="#d79a35"/>
<polygon points="89.0,76.0 89.7,77.8 91.6,77.5 90.3,79.0 91.6,80.5 89.7,80.2 89.0,82.0 88.3,80.2 86.4,80.5 87.7,79.0 86.4,77.5 88.3,77.8" fill="#d79a35"/>
<polygon points="68.0,64.9 68.2,65.6 69.0,65.5 68.5,66.0 69.0,66.5 68.2,66.4 68.0,67.1 67.8,66.4 67.0,66.5 67.5,66.0 67.0,65.5 67.8,65.6" fill="#c9803a"/>
<path d="M0 135 Q30 130 60 133 T112 133 L112 146 H0Z" fill="#7b9ab8"/>
<path d="M200 139 Q240 131 270 135 T314 133 V148 H200Z" fill="#86a0b8"/>
<rect x="0" y="139" width="314" height="150" fill="url(#pLand)"/>
<path d="M10 146 Q30 140 62 146 L68 160 Q40 152 10 160Z" fill="#557f36"/>
<path d="M10 164 Q36 156 66 168 L60 184 Q34 172 10 182Z" fill="#c2aa46"/>
<path d="M10 186 Q30 178 56 190 L46 208 Q30 196 10 204Z" fill="#95903a"/>
<path d="M10 176 Q22 172 30 180 L34 200 Q22 196 10 200Z" fill="#b29e40"/>
<path d="M10 198 Q24 194 36 206 L38 240 H10Z" fill="#47722c"/>
<path d="M18 214 Q30 204 42 212 L42 246 Q26 252 16 240Z" fill="#c9ae88"/><path d="M24 216 L28 240 M34 212 L36 242" stroke="#a08660" stroke-width="1"/>
<rect x="27" y="158" width="3.6" height="22" rx="1.8" fill="#2a5226"/>
<path d="M44 160 L56 154 L66 158 L64 170 L46 172Z" fill="#b08456"/><path d="M48 162 L56 158 L62 161" stroke="#e0c8a0" stroke-width="1.4" fill="none"/>
<path d="M12 150 Q30 146 50 150" stroke="#3f6a2a" stroke-width="2.4" fill="none"/>
<rect x="12" y="140" width="36" height="7" fill="#d6c9aa"/><rect x="12" y="146" width="36" height="3" fill="#806f52"/>
<rect x="15" y="142" width="1.4" height="3.4" fill="#5a4c38"/>
<rect x="20" y="142" width="1.4" height="3.4" fill="#5a4c38"/>
<rect x="25" y="142" width="1.4" height="3.4" fill="#5a4c38"/>
<rect x="30" y="142" width="1.4" height="3.4" fill="#5a4c38"/>
<rect x="35" y="142" width="1.4" height="3.4" fill="#5a4c38"/>
<rect x="40" y="142" width="1.4" height="3.4" fill="#5a4c38"/>
<rect x="45" y="142" width="1.4" height="3.4" fill="#5a4c38"/>
<path d="M20.5 141 V134 A9.5 10 0 0 1 39.5 134 V141Z" fill="url(#pDome)" stroke="#5a380c" stroke-width="0.6"/><rect x="29.5" y="120.6" width="1" height="4" fill="#8a5a14"/>
<rect x="10" y="128" width="4.4" height="14" fill="#b8aa90"/>
<path d="M236 144 Q270 140 304 148 V162 Q270 152 236 158Z" fill="#64863a"/>
<path d="M240 160 Q272 154 304 166 V186 Q272 170 244 176Z" fill="#c8ab40"/>
<path d="M246 178 Q272 172 304 188 V200 Q276 186 250 192Z" fill="#ad983a"/>
<path d="M252 192 Q280 186 304 198 V224 Q280 206 258 212Z" fill="#bc9c36"/>
<path d="M262 222 Q284 216 304 232 V262 Q286 240 268 244Z" fill="#9e8c34"/>
<path d="M268 240 Q290 244 304 268 V287 H272Z" fill="#778a50"/>
<ellipse cx="259" cy="176" rx="9" ry="10" fill="#3a692a"/>
<ellipse cx="255" cy="170" rx="5" ry="6" fill="#4d8036"/>
<ellipse cx="270" cy="160" rx="5" ry="13" fill="#305a26"/>
<ellipse cx="288" cy="192" rx="10" ry="14" fill="#3a6e2e"/>
<ellipse cx="284" cy="186" rx="6" ry="8" fill="#4f8a3c"/>
<ellipse cx="280" cy="226" rx="8" ry="9" fill="#457430"/>
<ellipse cx="296" cy="224" rx="6" ry="8" fill="#3e6a2c"/>
<ellipse cx="278" cy="150" rx="10" ry="4" fill="#36602a"/>
<ellipse cx="297" cy="155" rx="7" ry="4" fill="#36602a"/>
<ellipse cx="250" cy="148" rx="6" ry="3" fill="#3a642a"/>
<path d="M284 153 L289 137 L295 153Z" fill="#7a9e96"/><path d="M291 151 L294 141 L298 151Z" fill="#688c82"/>
<path d="M200 154 V131 H206 V127 H226 V135 H232 V141 H240 V154Z" fill="#a29480"/>
<path d="M207 127 V123 A8.6 9.6 0 0 1 224.2 123 V127Z" fill="url(#pDome)" stroke="#5a380c" stroke-width="0.6"/><rect x="207" y="126" width="17.2" height="3" fill="#948c82"/><rect x="215.2" y="110.4" width="0.9" height="3.4" fill="#8a5a14"/>
<rect x="233" y="134" width="4.6" height="16" fill="#776e60"/><rect x="240" y="140" width="6" height="12" fill="#645e52"/><rect x="196" y="134" width="5" height="16" fill="#8a7e6c"/>
<rect x="203" y="130" width="1.8" height="7" fill="#4e463c"/>
<rect x="208" y="131" width="1.8" height="8" fill="#4e463c"/>
<rect x="213" y="131" width="1.8" height="8" fill="#4e463c"/>
<rect x="218" y="131" width="1.8" height="8" fill="#4e463c"/>
<rect x="223" y="132" width="1.8" height="7" fill="#4e463c"/>
<rect x="228" y="137" width="1.8" height="6" fill="#4e463c"/>
<rect x="198" y="138" width="1.8" height="6" fill="#4e463c"/>
<path d="M70 151 C80 152 88 156 92 162 L98 214 L96 232 L62 243 L50 282 L38 272 C30 262 25 252 26 244 C28 226 38 206 45 192 C50 180 56 166 70 151Z" fill="url(#pBlueL)" stroke="#0a1e48" stroke-width="1.2"/>
<path d="M232 162 C242 168 248 176 252 184 C258 196 262 206 265 214 C272 232 278 246 278 256 L276 290 L230 290 L224 252 L206 246 L214 222 L222 190Z" fill="url(#pBlueL)" stroke="#0a1e48" stroke-width="1.2"/>
<path d="M66 168 Q52 200 40 236" stroke="#0c2860" stroke-width="1.8" fill="none"/>
<path d="M76 170 Q62 206 48 250" stroke="#0c2860" stroke-width="1.8" fill="none"/>
<path d="M86 178 Q74 214 58 240" stroke="#0c2860" stroke-width="1.8" fill="none"/>
<path d="M92 200 Q82 222 66 238" stroke="#0c2860" stroke-width="1.8" fill="none"/>
<path d="M36 228 Q40 252 48 272" stroke="#0c2860" stroke-width="1.8" fill="none"/>
<path d="M60 176 Q44 206 32 240" stroke="#0c2860" stroke-width="1.8" fill="none"/>
<path d="M238 176 Q246 214 244 250" stroke="#0c2860" stroke-width="1.8" fill="none"/>
<path d="M246 190 Q258 226 258 284" stroke="#0c2860" stroke-width="1.8" fill="none"/>
<path d="M254 204 Q270 240 268 286" stroke="#0c2860" stroke-width="1.8" fill="none"/>
<path d="M232 206 Q232 236 240 284" stroke="#0c2860" stroke-width="1.8" fill="none"/>
<path d="M226 232 Q246 250 250 286" stroke="#0c2860" stroke-width="1.8" fill="none"/>
<path d="M262 216 Q274 246 273 280" stroke="#0c2860" stroke-width="1.8" fill="none"/>
<path d="M71 170 Q58 202 45 238" stroke="#4a8ad8" stroke-width="1.3" fill="none" opacity="0.85"/>
<path d="M81 176 Q68 210 54 244" stroke="#4a8ad8" stroke-width="1.3" fill="none" opacity="0.85"/>
<path d="M52 200 Q42 222 36 244" stroke="#4a8ad8" stroke-width="1.3" fill="none" opacity="0.85"/>
<path d="M242 184 Q252 220 251 262" stroke="#4a8ad8" stroke-width="1.3" fill="none" opacity="0.85"/>
<path d="M250 198 Q265 236 263 280" stroke="#4a8ad8" stroke-width="1.3" fill="none" opacity="0.85"/>
<path d="M236 214 Q238 246 246 282" stroke="#4a8ad8" stroke-width="1.3" fill="none" opacity="0.85"/>
<path d="M66 152 L96 138 L104 244 L90 236 L84 172Z" fill="url(#pGold)" stroke="#2e1c08" stroke-width="0.9"/>
<path d="M116 138 L198 138 L190 206 L138 208Z" fill="url(#pGold)"/>
<path d="M138 150 L161 203 L184 152" stroke="#2e1c08" stroke-width="1.2" fill="none"/><path d="M126 150 L146 204 M189 164 L176 204" stroke="#e0a834" stroke-width="1" fill="none"/>
<rect x="99" y="246" width="100" height="44" fill="url(#pGold)"/>
<rect x="99" y="246" width="100" height="3.6" fill="#4e3210"/><rect x="99" y="258.4" width="100" height="1.8" fill="#3e260c"/><rect x="99" y="251" width="100" height="1" fill="#e0a834"/><rect x="112" y="281" width="70" height="2.2" fill="#3e260c"/>
<ellipse cx="170" cy="266" rx="6" ry="4.6" fill="#285486"/><ellipse cx="128" cy="270" rx="5" ry="4" fill="#b03a26"/><ellipse cx="150" cy="272" rx="5" ry="6" fill="none" stroke="#e0a834" stroke-width="1.2"/>
<path d="M146 162 L176 162 L168 192 L161 203 L154 190Z" fill="#d4d4d2"/>
<path d="M158 168 V196 M162 168 V200 M166 170 V192" stroke="#8e8e90" stroke-width="0.9"/>
<path d="M118 120 C110 124 96 132 88 141 C88 160 90 180 91 205 C91 220 92 232 94 238 C96 244 100 247 104 249 C130 252 170 252 198 248 C208 244 214 240 218 232 C224 220 228 204 230 186 L236 172 L258 213 L263 208 L243 166 C238 158 232 153 224 149 C214 138 202 126 192 117 L191 161 L187 196 L181 205 L143 205 L131.4 196 L124.4 168 L121.6 145Z" fill="url(#pRed)" stroke="#4a0c08" stroke-width="1.2"/>
<path d="M100 134 Q98 180 100 240" stroke="#70100a" stroke-width="1.7" fill="none"/>
<path d="M108 130 Q106 184 110 232" stroke="#70100a" stroke-width="1.7" fill="none"/>
<path d="M116 132 Q116 176 126 214" stroke="#70100a" stroke-width="1.7" fill="none"/>
<path d="M94 150 Q93 190 96 232" stroke="#70100a" stroke-width="1.7" fill="none"/>
<path d="M98 206 Q130 226 200 214" stroke="#70100a" stroke-width="1.7" fill="none"/>
<path d="M96 218 Q140 240 212 222" stroke="#70100a" stroke-width="1.7" fill="none"/>
<path d="M100 232 Q150 250 214 232" stroke="#70100a" stroke-width="1.7" fill="none"/>
<path d="M120 210 Q160 224 196 209" stroke="#70100a" stroke-width="1.7" fill="none"/>
<path d="M140 208 Q160 216 184 207" stroke="#70100a" stroke-width="1.7" fill="none"/>
<path d="M96 226 Q150 246 214 226" stroke="#70100a" stroke-width="1.7" fill="none"/>
<path d="M196 126 Q200 170 190 204" stroke="#70100a" stroke-width="1.7" fill="none"/>
<path d="M206 134 Q212 180 204 226" stroke="#70100a" stroke-width="1.7" fill="none"/>
<path d="M216 144 Q224 186 214 232" stroke="#70100a" stroke-width="1.7" fill="none"/>
<path d="M226 154 Q232 176 226 206" stroke="#70100a" stroke-width="1.7" fill="none"/>
<path d="M104 244 Q150 256 200 246" stroke="#70100a" stroke-width="1.7" fill="none"/>
<path d="M232 160 Q246 184 258 210" stroke="#70100a" stroke-width="1.7" fill="none"/>
<path d="M104 136 Q102 182 105 236" stroke="#f26a4c" stroke-width="1.4" fill="none" opacity="0.9"/>
<path d="M112 134 Q111 180 118 222" stroke="#f26a4c" stroke-width="1.4" fill="none" opacity="0.9"/>
<path d="M100 212 Q140 232 206 218" stroke="#f26a4c" stroke-width="1.4" fill="none" opacity="0.9"/>
<path d="M104 226 Q150 244 212 228" stroke="#f26a4c" stroke-width="1.4" fill="none" opacity="0.9"/>
<path d="M201 132 Q206 174 197 214" stroke="#f26a4c" stroke-width="1.4" fill="none" opacity="0.9"/>
<path d="M211 140 Q218 184 209 228" stroke="#f26a4c" stroke-width="1.4" fill="none" opacity="0.9"/>
<path d="M221 150 Q228 178 221 214" stroke="#f26a4c" stroke-width="1.4" fill="none" opacity="0.9"/>
<path d="M108 238 Q150 252 204 240" stroke="#f26a4c" stroke-width="1.4" fill="none" opacity="0.9"/>
<path d="M50 238 L100 236 L106 252 L100 290 L44 290Z" fill="#5a140c"/>
<path d="M196 246 L232 244 L236 290 L206 290 L198 262Z" fill="#12336e"/>
<path d="M57 230 L93 224 L99 238 L68 244 L56 290 L41 290 L45.8 263Z" fill="url(#pGold)" stroke="#2e1c08" stroke-width="0.9"/>
<path d="M57 230 L93 224 L94.6 228 L60 235 L49 266 L45 290 L41 290 L45.8 263Z" fill="#b4621e" opacity="0.85"/>
<path d="M68 244 L99 238 L104 250 L74 253Z" fill="#5e140c"/>
<path d="M197.5 254.7 L217 245 L228 259 L234 290 L215.5 290 L208.6 261.6 L200 262Z" fill="url(#pGold)" stroke="#2e1c08" stroke-width="0.9"/>
<path d="M217 245 L228 259 L234 290 L229 290 L223.6 261 L214 248Z" fill="#b4621e" opacity="0.85"/>
<path d="M70.8 251 L93 249 C110 258 125 272 135 290 L73.6 290 L68 266Z" fill="url(#pHand)" stroke="#5a3014" stroke-width="0.9"/>
<path d="M169.7 290 C171 282 173 276 175 272.7 C180 266 185 263 190.5 261.6 L207 261.6 C210 266 210.4 270 210 273 L208.6 290Z" fill="url(#pHand)" stroke="#5a3014" stroke-width="0.9"/>
<path d="M78 256 Q98 260 112 280 M88 252 Q108 262 124 284 M182 272 Q194 268 206 272 M180 282 Q192 276 206 282" stroke="#f0c8a0" stroke-width="0.9" fill="none" opacity="0.85"/>
<path d="M96 268 Q110 276 118 290 M108 284 L124 290" stroke="#8a4e24" stroke-width="0.8" fill="none"/>
<path d="M129 62 C122 66 112 74 108 84 C104 92 105 102 111 108 C118 113 126 110 130 106 C128 96 127 80 129 62Z" fill="#8c8c8e" stroke="#3e3e42" stroke-width="0.9"/>
<path d="M186 63 C192 68 198 76 199 86 C200 96 197 104 190 107 C186 100 185 92 186 84Z" fill="#8c8c8e" stroke="#3e3e42" stroke-width="0.9"/>
<path d="M124 70 Q112 84 116 100 M128 80 Q120 92 124 104 M190 70 Q198 84 192 100 M118 78 Q110 90 114 104" stroke="#dedede" stroke-width="1.3" fill="none"/>
<path d="M121 72 Q110 88 114 104 M193 74 Q200 88 194 102" stroke="#4a4b50" stroke-width="1" fill="none"/>
<path d="M129 62 C133 52 144 47 157 47 C168 47 180 52 186 63 C188 76 187 90 183 100 C178 110 168 116 157 116 C146 116 137 110 132 100 C128 90 127 74 129 62Z" fill="url(#pFace)" stroke="#4a240c" stroke-width="0.8"/>
<path d="M136 56 Q156 52 178 57 M138 60 Q157 56 177 61 M140 64 Q157 60 175 64.6" stroke="#a05a28" stroke-width="0.7" fill="none"/>
<path d="M134 70 Q142 65 151 69" stroke="#4e4a48" stroke-width="2.4" fill="none"/><path d="M163 69 Q172 65 181 70" stroke="#4e4a48" stroke-width="2.4" fill="none"/>
<ellipse cx="143.2" cy="76.4" rx="4.6" ry="2.3" fill="#ecdcc4"/><circle cx="143.4" cy="76.4" r="2.3" fill="#24160c"/>
<ellipse cx="170.2" cy="75.8" rx="4.6" ry="2.3" fill="#ecdcc4"/><circle cx="170" cy="75.8" r="2.3" fill="#24160c"/>
<path d="M137 74 Q143 71.2 149 75 M164 74.4 Q170 70.8 176 74" stroke="#30180a" stroke-width="1.1" fill="none"/>
<path d="M138 81 Q144 85 150 81 M164 80.6 Q170 84.6 177 81" stroke="#8e4a22" stroke-width="1" fill="none"/>
<path d="M154 74 Q152 88 150 94 Q157 99 164 94 Q162 88 160 74" fill="#e29c5e" stroke="#8e4a22" stroke-width="0.7"/><path d="M157 76 V92" stroke="#f4c088" stroke-width="1.6" opacity="0.7"/>
<path d="M129 92 C123 98 117 106 117 120 C117 130 119 136 123 141 C127 148 131 152 135 155 C140 160 144 164 148 168 C151 174 152 180 154 185 C156 192 159 197 161 200 C163 197 166 192 168 185 C170 178 171 172 173 168 C176 163 178 159 180 155 C184 150 186 146 188 141 C193 134 197 128 197 120 C196 108 192 98 187 92 C184 98 176 100 168 99 C162 98 160 100 157 100 C154 100 152 98 146 99 C138 100 132 98 129 92Z" fill="url(#pBeard)" stroke="#3e3e42" stroke-width="0.9"/>
<path d="M124 110 Q122 128 132 146 T152 176" stroke="#4a4b50" stroke-width="1.3" fill="none"/>
<path d="M132 110 Q130 130 140 150 T156 184" stroke="#4a4b50" stroke-width="1.3" fill="none"/>
<path d="M142 110 Q140 134 150 156 T159 192" stroke="#4a4b50" stroke-width="1.3" fill="none"/>
<path d="M152 108 Q152 138 158 164 T161 196" stroke="#4a4b50" stroke-width="1.3" fill="none"/>
<path d="M162 108 Q164 138 163 164 T163 194" stroke="#4a4b50" stroke-width="1.3" fill="none"/>
<path d="M172 110 Q174 134 168 158 T165 186" stroke="#4a4b50" stroke-width="1.3" fill="none"/>
<path d="M182 110 Q186 130 176 152 T170 172" stroke="#4a4b50" stroke-width="1.3" fill="none"/>
<path d="M190 110 Q194 128 184 146" stroke="#4a4b50" stroke-width="1.3" fill="none"/>
<path d="M128 112 Q126 130 136 148 T153 178" stroke="#f0f0ee" stroke-width="1.2" fill="none" opacity="0.9"/>
<path d="M147 110 Q146 136 154 158" stroke="#f0f0ee" stroke-width="1.2" fill="none" opacity="0.9"/>
<path d="M157 110 Q158 138 160 160" stroke="#f0f0ee" stroke-width="1.2" fill="none" opacity="0.9"/>
<path d="M167 110 Q169 134 165 156" stroke="#f0f0ee" stroke-width="1.2" fill="none" opacity="0.9"/>
<path d="M177 110 Q181 130 173 150" stroke="#f0f0ee" stroke-width="1.2" fill="none" opacity="0.9"/>
<path d="M137 112 Q135 132 145 152" stroke="#f0f0ee" stroke-width="1.2" fill="none" opacity="0.9"/>
<path d="M120 130 A4 4 0 1 0 124 126" stroke="#44454a" stroke-width="1.2" fill="none"/>
<path d="M127 146 A4 4 0 1 0 131 142" stroke="#44454a" stroke-width="1.2" fill="none"/>
<path d="M138.4 160 A3.6 3.6 0 1 0 142 156.4" stroke="#44454a" stroke-width="1.2" fill="none"/>
<path d="M174.4 156 A3.6 3.6 0 1 0 178 152.4" stroke="#44454a" stroke-width="1.2" fill="none"/>
<path d="M184 140 A4 4 0 1 0 188 136" stroke="#44454a" stroke-width="1.2" fill="none"/>
<path d="M189 124 A4 4 0 1 0 193 120" stroke="#44454a" stroke-width="1.2" fill="none"/>
<path d="M156.6 178 A3.4 3.4 0 1 0 160 174.6" stroke="#44454a" stroke-width="1.2" fill="none"/>
<path d="M146.6 142 A3.4 3.4 0 1 0 150 138.6" stroke="#44454a" stroke-width="1.2" fill="none"/>
<path d="M164.6 138 A3.4 3.4 0 1 0 168 134.6" stroke="#44454a" stroke-width="1.2" fill="none"/>
<path d="M154.6 124 A3.4 3.4 0 1 0 158 120.6" stroke="#44454a" stroke-width="1.2" fill="none"/>
<path d="M134.6 124 A3.4 3.4 0 1 0 138 120.6" stroke="#44454a" stroke-width="1.2" fill="none"/>
<path d="M176.6 122 A3.4 3.4 0 1 0 180 118.6" stroke="#44454a" stroke-width="1.2" fill="none"/>
<path d="M130 105 Q138 94 150 96 Q157 99 164 96 Q176 94 185 105 Q172 100 164 103 Q157 100 150 103 Q140 100 130 105Z" fill="#a5a5a4" stroke="#4a4b50" stroke-width="0.8"/>
<path d="M151 105.4 Q157 103.4 163 105.4 Q157 109.4 151 105.4Z" fill="#94341f"/>
<path d="M130 86 Q134 96 140 100 M184 86 Q180 96 174 100 M146 86 Q142 92 138 98 M168 86 Q172 92 176 98" stroke="#8e4a22" stroke-width="1" fill="none"/>
<path d="M108 84 C100 70 100 50 108 38 C118 22 138 14 154 14 C176 14 196 28 202 48 C206 62 203 74 198 82 C194 76 190 70 186 63 C180 52 168 47 157 47 C144 47 133 52 129 62 C124 72 116 78 108 84Z" fill="url(#pTurb)" stroke="#3e0a06" stroke-width="1.2"/>
<path d="M106 72 Q116 40 152 30 Q180 26 200 46" stroke="#6e100a" stroke-width="1.7" fill="none"/>
<path d="M106 56 Q124 30 158 21" stroke="#6e100a" stroke-width="1.7" fill="none"/>
<path d="M112 80 Q120 52 148 42 Q176 38 201 64" stroke="#6e100a" stroke-width="1.7" fill="none"/>
<path d="M124 64 Q140 46 162 42 Q186 44 198 76" stroke="#6e100a" stroke-width="1.7" fill="none"/>
<path d="M118 30 Q150 28 176 40 Q192 50 198 70" stroke="#6e100a" stroke-width="1.7" fill="none"/>
<path d="M136 19 Q166 22 188 40" stroke="#6e100a" stroke-width="1.7" fill="none"/>
<path d="M103 50 Q112 36 126 26" stroke="#6e100a" stroke-width="1.7" fill="none"/>
<path d="M150 30 Q166 34 180 48" stroke="#6e100a" stroke-width="1.7" fill="none"/>
<path d="M107 64 Q120 36 154 25" stroke="#f26e50" stroke-width="1.4" fill="none" opacity="0.85"/>
<path d="M115 74 Q126 50 150 38 Q174 34 198 54" stroke="#f26e50" stroke-width="1.4" fill="none" opacity="0.85"/>
<path d="M128 23 Q160 24 184 42" stroke="#f26e50" stroke-width="1.4" fill="none" opacity="0.85"/>
<path d="M130 58 Q146 44 164 44" stroke="#f26e50" stroke-width="1.4" fill="none" opacity="0.85"/>
</g>
<path d="M93 0 A152 152 0 0 0 11 93 L11 218 Q18 255 42 287 L272 287 Q296 255 303 218 L303 93 A152 152 0 0 0 224 0Z" fill="none" stroke="#d5902c" stroke-width="2"/>
</g>
</svg>
<div id="statusbar" class="abs"></div>
<svg width="1920" height="27" viewBox="0 1003 1920 27" style="top:1003px">
<text x="15.4" y="1021.9" font-size="12.6px" fill="#444" textLength="108.3" lengthAdjust="spacingAndGlyphs">Страница 8 из 404</text>
<text x="148.8" y="1021.9" font-size="12.6px" fill="#444" textLength="116.4" lengthAdjust="spacingAndGlyphs">Число слов: 141665</text>
<g stroke="#666" stroke-width="1.1" fill="none"><path d="M298.5 1010.6 V1022.6 M298.5 1010.4 H290.7 V1021.8 H296.8 L298.5 1023.6 L300.2 1021.8 H306.4 V1017.2 M298.5 1010.4 H300.8"/><path d="M300.6 1016 L302.6 1018.4 L306.6 1013.2" stroke="#555" stroke-width="1.4"/></g>
<text x="330.3" y="1021.9" font-size="12.6px" fill="#444" textLength="133.7" lengthAdjust="spacingAndGlyphs">узбекский (кириллица)</text>
<g stroke="#555" stroke-width="1.1" fill="none"><circle cx="495" cy="1017.8" r="6.8" stroke-dasharray="3.4 1.7" transform="rotate(-60 495 1017.8)"/><path d="M495.6 1009.2 V1016.6 M493.4 1014.4 L495.6 1016.8 L497.8 1014.4 M495.6 1016.8 H500"/></g>
<text x="500.2" y="1025.8" font-size="15.5px" fill="#444" textLength="6.6" lengthAdjust="spacingAndGlyphs" font-weight="bold">?</text>
<text x="509.6" y="1021.9" font-size="12.6px" fill="#444" textLength="291.6" lengthAdjust="spacingAndGlyphs">Специальные возможности: не поддерживаются</text>
<rect x="1594" y="1004" width="49.8" height="26" fill="#c6c6c6"/>
<g stroke="#686868" stroke-width="1.2" fill="none"><path d="M1560.6 1009.6 H1576.6 V1021.6 H1560.6Z M1568.6 1009.6 V1023.4"/><path d="M1562.6 1012.4h4.4 M1562.6 1014.4h4.4 M1562.6 1016.4h4.4 M1562.6 1018.4h4.4 M1570.2 1012.4h4.4 M1570.2 1014.4h4.4 M1570.2 1016.4h4.4 M1570.2 1018.4h4.4" stroke-width="1"/><path d="M1567.4 1022 L1568.6 1023.8 L1569.8 1022" stroke-width="1"/></g>
<g stroke="#686868" stroke-width="1.3" fill="none"><rect x="1610.8" y="1009.8" width="15.8" height="14.4"/><path d="M1612.6 1012.6h12.2 M1612.6 1015.5h12.2 M1612.6 1018.4h12.2 M1612.6 1021.4h12.2" stroke-width="1.1"/></g>
<g stroke="#686868" stroke-width="1.2" fill="none"><path d="M1670 1022 H1661.6 V1010.6 H1674.6 V1016"/><path d="M1663.4 1013.2h9.4 M1663.4 1015.3h9.4 M1663.4 1017.5h6 M1663.4 1019.6h5" stroke-width="1"/></g>
<circle cx="1673.4" cy="1020.4" r="4.9" fill="#f3f3f3"/><circle cx="1673.4" cy="1020.4" r="4" fill="#7a7a7a"/><path d="M1670.6 1018.6 Q1672.6 1017.4 1674 1018.8 Q1673.2 1020.6 1675.4 1022.4 M1675 1017.6 L1676.6 1019.4" stroke="#f3f3f3" stroke-width="1.2" fill="none"/>
<rect x="1701.4" y="1016.4" width="8.8" height="1.1" fill="#3a3a3a"/>
<rect x="1716.8" y="1016.5" width="125.4" height="1" fill="#3a3a3a"/>
<rect x="1777.2" y="1010" width="5.8" height="14" fill="#444"/>
<rect x="1848.2" y="1016.4" width="9" height="1.1" fill="#3a3a3a"/><rect x="1852.1" y="1012.4" width="1.1" height="9" fill="#3a3a3a"/>
<text x="1875" y="1021.7" font-size="12.6px" fill="#444" textLength="34" lengthAdjust="spacingAndGlyphs">100 %</text>
</svg>
<div id="taskbar" class="abs"></div>
<svg width="1920" height="50" viewBox="0 1030 1920 50" style="top:1030px">
<defs><linearGradient id="gStar" x1="0" y1="0" x2="0" y2="1"><stop offset="0" stop-color="#ffd84a"/><stop offset="1" stop-color="#f7a81e"/></linearGradient>
<linearGradient id="gEdge" x1="0" y1="0" x2="1" y2="1"><stop offset="0" stop-color="#35c1f1"/><stop offset="0.5" stop-color="#1b9de2"/><stop offset="1" stop-color="#0c59a4"/></linearGradient>
<linearGradient id="gEdge2" x1="0" y1="1" x2="1" y2="0"><stop offset="0" stop-color="#1b9de2"/><stop offset="0.55" stop-color="#49c96d"/><stop offset="1" stop-color="#7ddb4f"/></linearGradient>
<linearGradient id="gCloud" x1="0" y1="0" x2="0" y2="1"><stop offset="0" stop-color="#dfe9fb"/><stop offset="1" stop-color="#7fa8ee"/></linearGradient>
<linearGradient id="gOpera" x1="0" y1="0" x2="0" y2="1"><stop offset="0" stop-color="#ff1b2d"/><stop offset="1" stop-color="#a70014"/></linearGradient>
</defs>
<g fill="#fff"><path d="M19.8 1047.8 L28 1046.6 V1054.2 H19.8Z"/><path d="M29.2 1046.4 L40.2 1044.8 V1054.2 H29.2Z"/><path d="M19.8 1055.4 H28 V1063 L19.8 1061.8Z"/><path d="M29.2 1055.4 H40.2 V1064.8 L29.2 1063.2Z"/></g>
<rect x="60" y="1030" width="360" height="50" fill="#f3f3f3"/>
<rect x="60" y="1030" width="360" height="1" fill="#d8d8d8"/><rect x="60" y="1079" width="360" height="1" fill="#cfcfcf"/>
<circle cx="88.2" cy="1051.8" r="6.2" fill="none" stroke="#1e1e1e" stroke-width="1.6"/><path d="M83.8 1056.2 L75.6 1064.6" stroke="#1e1e1e" stroke-width="1.6"/>
<text x="110.9" y="1061.8" font-size="18px" fill="#1c1c1c" textLength="53.4" lengthAdjust="spacingAndGlyphs">Поиск</text>
<path d="M360.5 1039.4 Q365.3 1049.2 375.1 1054 Q365.3 1058.8 360.5 1068.6 Q355.7 1058.8 345.9 1054 Q355.7 1049.2 360.5 1039.4Z" fill="url(#gStar)"/>
<path d="M388.8 1052 Q391.1 1056.7 395.8 1059 Q391.1 1061.3 388.8 1066 Q386.5 1061.3 381.8 1059 Q386.5 1056.7 388.8 1052Z" fill="url(#gStar)"/>
<path d="M335.8 1060 Q337.2 1063.6 340.8 1065 Q337.2 1066.4 335.8 1070 Q334.40000000000003 1066.4 330.8 1065 Q334.40000000000003 1063.6 335.8 1060Z" fill="#1f9cf0" transform="rotate(15 335.8 1065)"/>
<circle cx="380.8" cy="1042.4" r="2.5" fill="#f2622a"/><circle cx="403.7" cy="1067" r="2.5" fill="#8dc63f"/>
<g stroke="#fff" stroke-width="1.3" fill="none"><rect x="442" y="1049.4" width="11.6" height="9.6"/><path d="M440 1046 V1047.2 H455.4 V1046 M440 1063.4 V1062 H455.4 V1063.4"/><path d="M459.4 1045.4 V1050.6 M459.4 1056.2 V1063.6"/></g><rect x="458" y="1051.4" width="2.8" height="3.6" fill="#fff"/>
<circle cx="514" cy="1054.8" r="15.2" fill="url(#gEdge)"/>
<path d="M499.6 1050 Q503 1039.6 514 1039.6 Q527 1039.8 529.2 1052.4 Q529 1059 522 1059.6 Q517.4 1059.4 517.6 1056.4 Q520 1053.2 518 1050 Q514.6 1046 508.6 1046.6 Q502.6 1047.6 499.6 1052.6Z" fill="url(#gEdge2)"/>
<path d="M507 1050.6 Q503.4 1056 506.2 1062.6 Q509.6 1069 517.4 1069.6 Q524 1069 527.4 1063.6 Q521 1067 515.4 1063.6 Q510.4 1059.6 512.4 1053 Q510 1050 507 1050.6Z" fill="#0f4f9a"/>
<rect x="488.8" y="1077.4" width="51.2" height="2.6" fill="#a5ecf7"/>
<path d="M562.4 1044.4 Q562.4 1043 563.8 1043 H572.4 L575 1046 H562.4Z" fill="#e8a317"/>
<rect x="562.4" y="1045.6" width="27.2" height="19.4" rx="1.2" fill="#fcd462"/>
<rect x="562.4" y="1060.8" width="27.2" height="4.4" fill="#f4b93a"/>
<path d="M566.8 1065.4 V1056.6 Q566.8 1055.4 568 1055.4 H584 Q585.2 1055.4 585.2 1056.6 V1065.4 H581.2 V1059.4 H570.8 V1065.4Z" fill="#3b8fe3"/>
<rect x="551" y="1077.4" width="51" height="2.6" fill="#a5ecf7"/>
<ellipse cx="637.7" cy="1054.4" rx="14.2" ry="14" fill="url(#gOpera)"/>
<ellipse cx="637.2" cy="1054.4" rx="6.6" ry="10.4" fill="#1b2b31"/>
<path d="M637.7 1040.4 A14.2 14 0 0 1 637.7 1068.4 Q646 1066 646.4 1054.4 Q646 1042.8 637.7 1040.4Z" fill="#c3111f" opacity="0.55"/>
<rect x="670" y="1030" width="56.4" height="50" fill="#49585e"/><rect x="726.4" y="1030" width="4.4" height="50" fill="#364449"/>
<rect x="670" y="1077" width="56.4" height="3" fill="#a5ecf7"/><rect x="726.4" y="1077" width="4.4" height="3" fill="#7fb5c0"/>
<path d="M692 1041 H712.6 Q714.3 1041 714.3 1042.6 V1048 H692Z" fill="#41a5ee"/><rect x="692" y="1048" width="22.3" height="7" fill="#2b7cd3"/><rect x="692" y="1055" width="22.3" height="6.8" fill="#185abd"/><path d="M692 1061.8 H714.3 V1066.8 Q714.3 1068.4 712.6 1068.4 H692Z" fill="#103f91"/>
<rect x="685" y="1047.4" width="14.8" height="14.8" rx="1.4" fill="#185abd"/>
<text x="687.4" y="1059.6" font-size="11.5px" fill="#fff" textLength="10" lengthAdjust="spacingAndGlyphs" font-weight="bold">W</text>
<path d="M1371.6 1040.4 Q1369.6 1046.6 1374.4 1050 Q1378.4 1052.4 1382.4 1049.6 Q1380.4 1056 1373.6 1055.6 Q1366.6 1054.4 1366.6 1047.4 Q1367 1042.4 1371.6 1040.4Z" fill="#f7a21b"/>
<path d="M1366.4 1068.8 Q1359.6 1068.6 1359.6 1062.6 Q1360 1057.2 1365.6 1056.8 Q1367.4 1051.2 1373.4 1051.2 Q1378.6 1051.4 1380.4 1056 Q1383.2 1054.6 1386.2 1056.4 Q1390.6 1059.4 1390.4 1063.4 Q1390 1068.6 1384.4 1068.8Z" fill="url(#gCloud)"/>
<text x="1400.2" y="1061.8" font-size="18px" fill="#fff" textLength="26.8" lengthAdjust="spacingAndGlyphs">9°C</text>
<text x="1438.8" y="1061.8" font-size="18px" fill="#fff" textLength="110.2" lengthAdjust="spacingAndGlyphs">Mostly cloudy</text>
<path d="M1580.4 1058.6 L1588 1051 L1595.6 1058.6" stroke="#fff" stroke-width="1.4" fill="none"/>
<g stroke="#fff" stroke-width="1.2" fill="none"><rect x="1612.4" y="1049.8" width="8.8" height="10.4" rx="2"/><path d="M1621.4 1054 L1625.8 1051.4 V1058.8 L1621.4 1056.2"/><path d="M1613.6 1047.4 Q1616.8 1045.6 1620 1047.4 M1613.6 1062.6 Q1616.8 1064.4 1620 1062.6"/></g>
<g stroke="#fff" stroke-width="1.2" fill="none"><path d="M1638.6 1048.6 L1658 1045.4 V1063 L1638.6 1061.4Z"/><path d="M1643.6 1053.4 Q1646 1050 1650 1051.4 M1650.4 1049.2 V1052 H1647.6 M1651 1056.6 Q1648.4 1060 1644.6 1058.4 M1644 1060.8 V1058 H1646.8"/></g>
<circle cx="1653.4" cy="1060.4" r="4.6" fill="#2f7ed8"/>
<g stroke="#fff" stroke-width="1.2" fill="none"><rect x="1673.6" y="1049.6" width="13.4" height="10.4"/><path d="M1687.4 1052.6 V1057"/><path d="M1668.2 1053.4 H1673 M1669.6 1049 V1053 M1671.8 1049 V1053 M1670.6 1056 V1060"/></g><rect x="1675.2" y="1051.2" width="10.2" height="7.2" fill="#fff"/>
<g stroke="#fff" stroke-width="1.4" fill="none"><path d="M1701.4 1062.6 Q1702 1050.2 1715.6 1048.8" opacity="0.55"/><path d="M1705.4 1062.8 Q1706 1054.4 1715.8 1053.2"/><path d="M1709.4 1063 Q1710 1058.6 1716 1057.6"/></g><circle cx="1714.6" cy="1062" r="1.5" fill="#fff"/>
<text x="1731.4" y="1061" font-size="15px" fill="#fff" textLength="28.3" lengthAdjust="spacingAndGlyphs">ENG</text>
<text x="1794.3" y="1048.7" font-size="15px" fill="#fff" textLength="33.3" lengthAdjust="spacingAndGlyphs">10:02</text>
<text x="1777" y="1071.8" font-size="15px" fill="#fff" textLength="68.4" lengthAdjust="spacingAndGlyphs">12.03.2025</text>
<path d="M1869 1045 H1889.4 V1060.4 H1879.6 L1875.4 1064.4 V1060.4 H1869Z" fill="#fff"/>
<path d="M1873 1049.4h12.4 M1873 1052.6h12.4 M1873 1055.8h8" stroke="#1b2b31" stroke-width="1"/>
<circle cx="1888.3" cy="1064.4" r="9.6" fill="#2a3134" stroke="#5b6366" stroke-width="1"/>
<text x="1884.6" y="1069.6" font-size="14.5px" fill="#fff" textLength="7.4" lengthAdjust="spacingAndGlyphs" font-weight="bold">1</text>
<rect x="1914.4" y="1030" width="1" height="50" fill="#6d787c"/>
</svg>
</body>
</html>
